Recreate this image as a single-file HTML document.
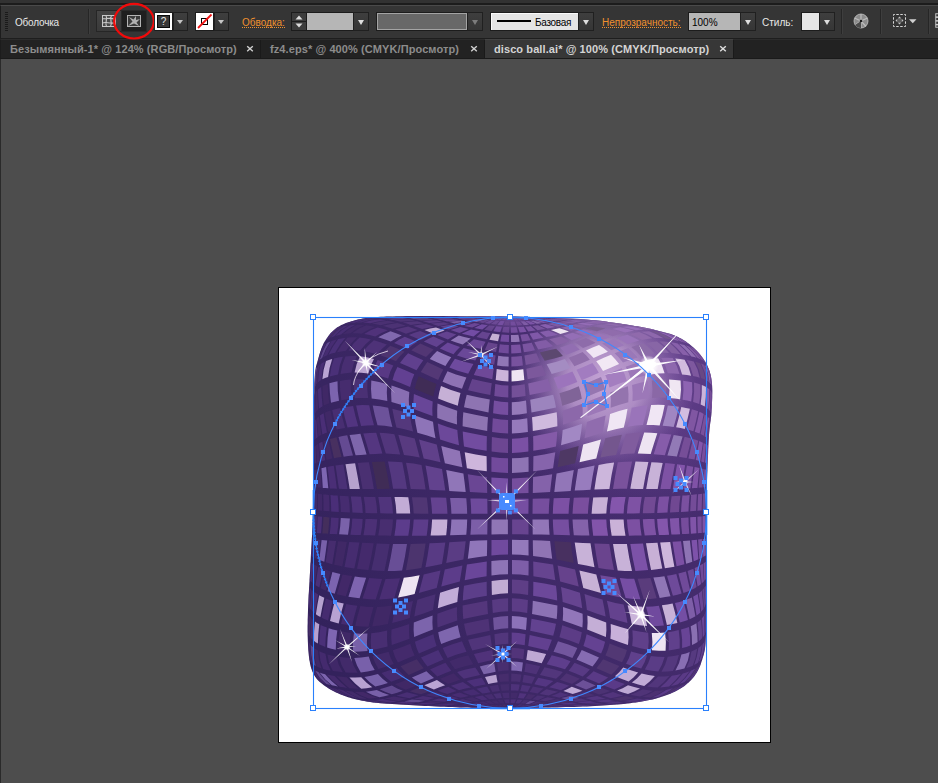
<!DOCTYPE html>
<html lang="ru">
<head>
<meta charset="utf-8">
<title>disco ball.ai @ 100% (CMYK/Просмотр)</title>
<style>
*{box-sizing:border-box;margin:0;padding:0}
html,body{width:938px;height:783px;overflow:hidden;background:#4d4d4d}
body{position:relative;font-family:"Liberation Sans",sans-serif;font-size:10px;color:#e6e6e6}
.abs{position:absolute}
#top{left:0;top:0;width:938px;height:3px;background:#323232}
#topline{left:0;top:3px;width:938px;height:2px;background:#1c1c1c}
#ctrl{left:0;top:5px;width:938px;height:33px;background:#353535;border-top:1px solid #4a4a4a;border-left:1px solid #1c1c1c}
#ctrlb{left:0;top:38px;width:938px;height:1px;background:#1e1e1e}
#tabs{left:0;top:39px;width:938px;height:19px;background:#222;border-top:1px solid #2c2c2c;border-left:1px solid #1c1c1c}
#tabsb{left:0;top:58px;width:938px;height:1px;background:#1a1a1a}
#canvasL{left:0;top:59px;width:1px;height:724px;background:#2a2a2a}
.lbl{position:absolute;top:17px;height:12px;line-height:12px;white-space:nowrap;font-size:10px;color:#e8e8e8}
.lnk{color:#f0902e}
.lnk:after{content:"";position:absolute;left:0;right:0;top:10px;height:1px;background:repeating-linear-gradient(90deg,#f0902e 0,#f0902e 1px,transparent 1px,transparent 2px)}
.sep{position:absolute;top:9px;width:1px;height:25px;background:#262626;box-shadow:1px 0 0 #3e3e3e}
.btn{position:absolute;top:12px;height:19px;background:#2b2b2b;border:1px solid #1f1f1f}
.dd{position:absolute;top:12px;height:19px;width:15px;background:linear-gradient(#3e3e3e,#363636);border:1px solid #202020}
.dd:after{content:"";position:absolute;left:3px;top:7px;border:3.5px solid transparent;border-top:4px solid #c6c6c6;border-bottom:0}
.dd.w:after{left:3.5px;top:6.5px;border-width:3.5px;border-top:5px solid #dedede;border-bottom:0}
.dd.dim:after{border-top-color:#7c7c7c}
.tab{position:absolute;top:39px;height:19px;font-weight:bold;font-size:11px;line-height:12px;color:#8c8c8c;white-space:nowrap;letter-spacing:0.09px}
.tab span{position:absolute;top:4px}
.tabsep{position:absolute;top:40px;width:1px;height:18px;background:#1a1a1a}
.x{position:absolute;top:44px;width:9px;height:9px}
#artboard{left:278px;top:287px;width:493px;height:456px;background:#000}
#artboard i{position:absolute;left:1px;top:1px;width:491px;height:454px;background:#fff;display:block}
</style>
</head>
<body>
<div id="top" class="abs"></div>
<div id="topline" class="abs"></div>
<div id="ctrl" class="abs"></div>
<div id="ctrlb" class="abs"></div>
<div id="tabs" class="abs"></div>
<div id="tabsb" class="abs"></div>
<div id="canvasL" class="abs"></div>
<!-- control bar -->
<svg class="abs" style="left:4px;top:11px" width="5" height="22" viewBox="0 0 5 22"><g fill="#1a1a1a"><rect x="1" y="1" width="3" height="1"/><rect x="1" y="3" width="3" height="1"/><rect x="1" y="5" width="3" height="1"/><rect x="1" y="7" width="3" height="1"/><rect x="1" y="9" width="3" height="1"/><rect x="1" y="11" width="3" height="1"/><rect x="1" y="13" width="3" height="1"/><rect x="1" y="15" width="3" height="1"/><rect x="1" y="17" width="3" height="1"/><rect x="1" y="19" width="3" height="1"/></g></svg>
<div class="lbl" style="left:15px;letter-spacing:-0.2px">Оболочка</div>
<div class="sep" style="left:88px"></div>
<div class="btn" style="left:96px;top:10px;width:26px;height:22px;background:linear-gradient(#444,#3a3a3a);border-color:#262626"></div>
<div class="btn" style="left:121px;top:10px;width:26px;height:22px;background:#1f1f1f;border-color:#2a2a2a"></div>
<svg class="abs" style="left:101px;top:14px" width="16" height="14" viewBox="0 0 16 14"><rect x="1.5" y="1.5" width="13" height="11" fill="#4a4a4a" stroke="#c8c8c8"/><path d="M1.500 4.500C5 5.500 8 3 14.500 5.500M1.500 9C5 7 9 10.500 14.500 8.500M5 1.500C7 5 3.500 8 5.500 12.500M10.500 1.500C8 5 12 8.500 9.500 12.500" fill="none" stroke="#c8c8c8" stroke-width="1.100"/></svg>
<svg class="abs" style="left:126px;top:14px" width="16" height="14" viewBox="0 0 16 14"><rect x="1.500" y="1.500" width="13" height="11" fill="#3a3a3a" stroke="#b4b4b4"/><path d="M2 12L6.500 7.500L3 3L7.500 5.500L10 2L10 6L14 5L10.500 8.500L13 12L8 9.500Z" fill="#b0b0b0"/></svg>
<svg class="abs" style="left:110px;top:0" width="48" height="44" viewBox="0 0 48 44"><ellipse cx="24" cy="21.200" rx="19.800" ry="17.300" fill="none" stroke="#f20a0a" stroke-width="2.200"/></svg>
<div class="abs" style="left:154px;top:12px;width:19px;height:19px;background:#fff;border:1px solid #1c1c1c;border-left-color:#2c2c2c"><div style="position:absolute;left:2px;top:2px;width:13px;height:13px;background:#383838;border:1px solid #0a0a0a;color:#e8e8e8;font-size:10px;line-height:11px;text-align:center">?</div></div>
<div class="dd" style="left:173px"></div>
<div class="abs" style="left:195px;top:12px;width:19px;height:19px;background:#fff;border:1px solid #1c1c1c"><svg width="17" height="17" viewBox="0 0 17 17" style="display:block"><rect x="5.500" y="5.500" width="6" height="6" fill="none" stroke="#000" stroke-width="1"/><path d="M2 15L15.500 1.500" stroke="#f01414" stroke-width="1.800"/></svg></div>
<div class="dd" style="left:214px"></div>
<div class="lbl lnk" style="left:242px">Обводка:</div>
<div class="abs" style="left:291px;top:12px;width:16px;height:19px;background:#1c1c1c"><div style="position:absolute;left:1px;top:1px;width:14px;height:8px;background:#3c3c3c"></div><div style="position:absolute;left:1px;top:10px;width:14px;height:8px;background:#3c3c3c"></div><svg width="16" height="19" viewBox="0 0 16 19" style="position:absolute;left:0;top:0"><path d="M4.500 7.500L8 3.500L11.500 7.500ZM4.500 11.500L8 15.500L11.500 11.500Z" fill="#dcdcdc"/></svg></div>
<div class="abs" style="left:306px;top:12px;width:48px;height:19px;background:#b6b6b6;border:1px solid #1c1c1c"></div>
<div class="dd w" style="left:353px;width:16px"></div>
<div class="abs" style="left:376px;top:12px;width:92px;height:19px;background:#686868;border:1px solid #1c1c1c;box-shadow:inset 0 0 0 1px #a4a4a4"></div>
<div class="dd w dim" style="left:467px;width:16px"></div>
<div class="abs" style="left:490px;top:12px;width:89px;height:19px;background:#e4e4e4;border:1px solid #1c1c1c;box-shadow:inset 1px 1px 0 #fafafa"><div style="position:absolute;left:6px;top:7px;width:34px;height:2px;background:#000"></div><div style="position:absolute;left:44px;top:4px;font-size:10px;line-height:12px;color:#000;letter-spacing:-0.3px">Базовая</div></div>
<div class="dd w" style="left:578px;width:16px"></div>
<div class="lbl lnk" style="left:602px">Непрозрачность:</div>
<div class="abs" style="left:688px;top:12px;width:53px;height:19px;background:#b6b6b6;border:1px solid #1c1c1c"><div style="position:absolute;left:3px;top:4px;font-size:10px;line-height:12px;color:#000">100%</div></div>
<div class="dd w" style="left:740px;width:16px"></div>
<div class="lbl" style="left:762px">Стиль:</div>
<div class="abs" style="left:801px;top:12px;width:19px;height:19px;background:#e6e6e6;border:1px solid #1c1c1c"></div>
<div class="dd w" style="left:819px;width:16px"></div>
<div class="sep" style="left:841px"></div>
<svg class="abs" style="left:853px;top:13px" width="16" height="16" viewBox="0 0 16 16"><circle cx="8" cy="8" r="7" fill="#8c8c8c" stroke="#c4c4c4" stroke-width="0.800"/><path d="M8 8L8 1M8 8L14.500 5M8 8L13 13.500M8 8L8 15M8 8L2 12M8 8L1.500 5" stroke="#bdbdbd" stroke-width="1.200" fill="none"/><path d="M8 8L2 12A7 7 0 0 0 8 15Z" fill="#4a4a4a"/><circle cx="8" cy="8" r="1.300" fill="#1a1a1a"/></svg>
<div class="sep" style="left:880px"></div>
<svg class="abs" style="left:892px;top:13px" width="26" height="15" viewBox="0 0 26 15"><rect x="1.500" y="1.500" width="12" height="12" fill="none" stroke="#d8d8d8" stroke-width="1" stroke-dasharray="2.500 1.500" stroke-dashoffset="1.200"/><path d="M7.500 3.500L9.300 5.400H5.700ZM7.500 11.500L9.300 9.600H5.700ZM3.500 7.500L5.400 5.700V9.300ZM11.500 7.500L9.600 5.700V9.300Z" fill="#c4c4c4"/><rect x="5.800" y="5.800" width="3.400" height="3.400" fill="#5c5c5c"/><path d="M17 6.300H24.500L20.750 10.300Z" fill="#d0d0d0"/></svg>
<div class="sep" style="left:928px"></div>
<svg class="abs" style="left:935px;top:11px" width="3" height="19" viewBox="0 0 4 19"><path d="M1 0.500H4M1 18.500H4M1 0V19" stroke="#d0d0d0" stroke-width="1.200" fill="none"/><rect x="1" y="4" width="3" height="2" fill="#d0d0d0"/><rect x="1" y="9" width="3" height="2" fill="#d0d0d0"/><rect x="1" y="14" width="3" height="2" fill="#d0d0d0"/></svg>
<!-- tabs -->
<div class="tab" style="left:1px;width:259px"><span style="left:9px">Безымянный-1* @ 124% (RGB/Просмотр)</span></div>
<svg class="x" style="left:246px" viewBox="0 0 9 9"><path d="M1.200 2.200L6.800 7.200M6.800 2.200L1.200 7.200" stroke="#d2d2d2" stroke-width="1.400"/></svg>
<div class="tabsep" style="left:260px"></div>
<div class="tab" style="left:261px;width:223px"><span style="left:9px">fz4.eps* @ 400% (CMYK/Просмотр)</span></div>
<svg class="x" style="left:470px" viewBox="0 0 9 9"><path d="M1.200 2.200L6.800 7.200M6.800 2.200L1.200 7.200" stroke="#d2d2d2" stroke-width="1.400"/></svg>
<div class="tabsep" style="left:484px"></div>
<div class="tab" style="left:485px;width:248px;background:#373737;color:#d4d4d4;border-top:1px solid #424242"><span style="left:9px;top:3px">disco ball.ai* @ 100% (CMYK/Просмотр)</span></div>
<svg class="x" style="left:719px" viewBox="0 0 9 9"><path d="M1.200 2.200L6.800 7.200M6.800 2.200L1.200 7.200" stroke="#e0e0e0" stroke-width="1.400"/></svg>
<div class="tabsep" style="left:733px"></div>

<div id="artboard" class="abs"><i></i></div>
<svg class="abs" style="left:0;top:0" width="938" height="783" viewBox="0 0 938 783">
<defs><clipPath id="bc"><path d="M510 316.5 515.4 316.6 521.3 316.8 527.6 317 534.2 317.2 541.1 317.4 548 317.6 554.9 317.9 561.8 318.2 568.4 318.5 574.7 318.8 580.6 319.1 586 319.5 591 319.9 595.7 320.3 600.1 320.8 604.4 321.3 608.5 321.9 612.3 322.4 616 323 619.5 323.5 622.8 324 626 324.6 629.1 325 632 325.5 634.7 325.9 637.2 326.3 639.4 326.7 641.4 327 643.2 327.4 644.9 327.7 646.6 328 648.2 328.4 649.8 328.7 651.4 329.1 653.2 329.5 655 330 656.9 330.5 658.9 331 660.9 331.4 662.9 331.9 664.8 332.4 666.8 333 668.8 333.5 670.7 334.1 672.6 334.8 674.5 335.5 676.3 336.2 678 337 679.7 337.9 681.4 338.8 683 339.8 684.6 340.8 686.2 341.8 687.7 342.9 689.2 344.1 690.7 345.2 692.1 346.4 693.4 347.6 694.7 348.8 696 350 697.2 351.2 698.4 352.5 699.5 353.7 700.6 355 701.6 356.4 702.6 357.7 703.5 359 704.4 360.4 705.3 361.8 706.1 363.2 706.8 364.6 707.5 366 708.1 367.4 708.7 368.8 709.2 370.1 709.7 371.5 710.1 372.9 710.5 374.2 710.8 375.7 711.1 377.2 711.4 378.8 711.6 380.4 711.8 382.1 712 384 712.1 386 712.2 388.1 712.3 390.4 712.3 392.8 712.2 395.2 712.2 397.7 712.1 400.2 712 402.7 711.9 405.1 711.8 407.5 711.6 409.8 711.5 412 711.4 414 711.2 415.9 711 417.6 710.8 419.2 710.6 420.8 710.3 422.4 710.1 424 709.9 425.8 709.6 427.8 709.4 429.9 709.2 432.3 709 435 708.8 438.1 708.6 441.5 708.4 445.2 708.2 449.2 708.1 453.3 707.9 457.5 707.7 461.7 707.5 465.9 707.4 470 707.2 473.9 707.1 477.6 707 481 706.9 484 706.8 486.8 706.8 489.3 706.7 491.7 706.7 494 706.7 496.2 706.6 498.4 706.6 500.7 706.6 503.2 706.6 505.8 706.5 508.8 706.5 512 706.5 515.5 706.4 519.1 706.4 522.9 706.3 526.8 706.3 530.8 706.2 535 706.2 539.3 706.1 543.8 706.1 548.4 706.1 553.1 706 558 706 563 706 568.4 706 574.2 706 580.5 706.1 587 706.1 593.6 706.2 600.2 706.2 606.8 706.2 613.1 706.2 619.2 706.2 624.7 706.1 629.7 706 634 705.9 637.6 705.7 640.7 705.6 643.2 705.4 645.4 705.2 647.2 705 648.8 704.8 650.1 704.5 651.4 704.2 652.7 703.9 654 703.5 655.4 703 657 702.5 658.7 702 660.5 701.4 662.1 700.9 663.8 700.3 665.5 699.6 667.1 698.9 668.6 698.1 670.2 697.3 671.7 696.4 673.2 695.5 674.6 694.5 676 693.4 677.4 692.3 678.7 691.2 680 689.9 681.2 688.7 682.4 687.3 683.6 686 684.7 684.5 685.9 683 686.9 681.4 688 679.7 689 678 690 676.2 691 674.3 691.9 672.4 692.8 670.4 693.7 668.3 694.5 666.2 695.3 664 696.1 661.7 696.8 659.4 697.5 657 698.2 654.5 698.9 652 699.5 649.4 700.1 646.8 700.6 644.2 701.1 641.4 701.6 638.7 702 635.8 702.4 632.9 702.8 629.9 703.2 626.8 703.5 623.6 703.9 620.4 704.2 617 704.5 613.5 704.8 610 705.1 606.4 705.3 602.7 705.6 598.9 705.8 595.1 706 591.1 706.2 587.1 706.4 582.9 706.5 578.7 706.7 574.4 706.9 570 707 565.4 707.1 560.6 707.3 555.6 707.4 550.4 707.5 545.2 707.6 539.9 707.7 534.7 707.8 529.4 707.8 524.3 707.9 519.3 707.9 514.6 708 510 708 505.7 708 501.5 708 497.5 708 493.7 708 489.9 708 486.2 707.9 482.5 707.9 478.9 707.8 475.2 707.8 471.6 707.7 467.8 707.6 464 707.5 460.1 707.4 456.2 707.3 452.3 707.1 448.4 707 444.5 706.8 440.6 706.7 436.6 706.5 432.7 706.3 428.8 706.1 424.8 705.9 420.9 705.7 417 705.5 413 705.3 408.9 705 404.8 704.8 400.6 704.6 396.5 704.3 392.3 704.1 388.2 703.8 384.3 703.5 380.4 703.2 376.7 702.8 373.3 702.4 370 702 367 701.6 364.2 701.1 361.5 700.6 359 700.1 356.6 699.6 354.4 699 352.2 698.4 350.1 697.8 348.1 697.2 346 696.5 344 695.8 342 695 340 694.2 338 693.3 336 692.4 334.1 691.4 332.2 690.5 330.3 689.4 328.6 688.4 326.9 687.3 325.3 686.3 323.8 685.2 322.3 684.1 321 683 319.8 681.9 318.7 680.9 317.7 679.9 316.8 678.9 315.9 677.8 315.2 676.8 314.5 675.6 313.8 674.5 313.2 673.2 312.6 671.9 312 670.5 311.5 669 311 667.4 310.5 665.7 310.1 664 309.8 662.1 309.4 660.3 309.2 658.3 308.9 656.3 308.7 654.2 308.5 652 308.3 649.8 308.2 647.4 308 645 307.9 642.5 307.8 639.9 307.7 637.3 307.6 634.6 307.6 631.8 307.6 628.9 307.6 626 307.7 623 307.7 619.9 307.8 616.7 307.9 613.4 308 610 308.1 606.5 308.3 602.9 308.4 599.2 308.6 595.4 308.9 591.5 309.1 587.5 309.3 583.5 309.6 579.4 309.8 575.3 310.1 571.2 310.3 567.1 310.5 563 310.7 559 310.9 555 311.2 551 311.4 547.1 311.6 543.1 311.8 539.1 312.1 534.9 312.3 530.7 312.5 526.3 312.7 521.8 312.8 517 313 512 313.1 506.7 313.3 501.1 313.4 495.2 313.5 489.1 313.5 482.9 313.6 476.6 313.7 470.2 313.8 463.9 313.8 457.6 313.9 451.5 313.9 445.6 314 440 314 434.5 314.1 428.9 314.1 423.3 314.1 417.7 314.1 412.2 314.1 406.8 314.1 401.7 314.1 396.7 314.2 392 314.2 387.6 314.3 383.6 314.5 380 314.7 376.8 314.9 374.1 315.2 371.8 315.4 369.8 315.7 368.1 316 366.6 316.3 365.2 316.7 363.9 317.1 362.7 317.5 361.4 317.9 360 318.3 358.5 318.7 356.9 319.2 355.3 319.6 353.8 320.1 352.2 320.6 350.7 321.1 349.2 321.7 347.8 322.3 346.4 322.9 345 323.5 343.6 324.2 342.3 325 341 325.8 339.7 326.6 338.4 327.5 337.2 328.3 336 329.3 334.8 330.2 333.6 331.2 332.5 332.3 331.4 333.4 330.4 334.5 329.4 335.7 328.4 337 327.5 338.3 326.7 339.7 325.9 341.2 325.1 342.7 324.4 344.3 323.7 345.9 323.1 347.5 322.5 349.2 321.9 350.9 321.4 352.6 320.9 354.3 320.4 356 320 357.7 319.6 359.3 319.2 360.9 318.9 362.5 318.6 364.1 318.3 365.8 318.1 367.5 317.9 369.3 317.7 371.2 317.5 373.3 317.3 375.6 317.2 378 317 380.6 316.8 383.4 316.7 386.4 316.6 389.4 316.5 392.6 316.4 395.9 316.3 399.3 316.2 402.8 316.2 406.3 316.1 409.8 316.1 413.4 316 417 316 420.6 316 424.4 316 428.2 316 432.1 316 436.1 316 440.1 316 444.1 316 448.1 316.1 452.1 316.1 456.1 316.1 460.1 316.2 464 316.2 467.8 316.2 471.4 316.2 474.9 316.2 478.3 316.2 481.7 316.2 485.2 316.2 488.8 316.2 492.5 316.2 496.4 316.2 500.6 316.3 505.1 316.4Z"/></clipPath>
<linearGradient id="lg" gradientUnits="userSpaceOnUse" x1="310" y1="600" x2="710" y2="450"><stop offset="0" stop-color="#33225c"/><stop offset="0.5" stop-color="#3f2968"/><stop offset="1" stop-color="#462c6e"/></linearGradient>
<radialGradient id="glow" gradientUnits="userSpaceOnUse" cx="604" cy="382" r="92"><stop offset="0" stop-color="#caaada" stop-opacity="0.95"/><stop offset="0.4" stop-color="#c0a0d2" stop-opacity="0.8"/><stop offset="0.75" stop-color="#a07cbc" stop-opacity="0.35"/><stop offset="1" stop-color="#9470b4" stop-opacity="0"/></radialGradient>
<radialGradient id="glow2" gradientUnits="userSpaceOnUse" cx="640" cy="385" r="150"><stop offset="0" stop-color="#7a4fa2" stop-opacity="0.7"/><stop offset="0.5" stop-color="#6e4798" stop-opacity="0.45"/><stop offset="1" stop-color="#5a3a86" stop-opacity="0"/></radialGradient>
<radialGradient id="pole"><stop offset="0" stop-color="#76509e" stop-opacity="0.75"/><stop offset="0.5" stop-color="#76509e" stop-opacity="0.45"/><stop offset="1" stop-color="#76509e" stop-opacity="0"/></radialGradient>
</defs>
<path d="M510 316.5 515.4 316.6 521.3 316.8 527.6 317 534.2 317.2 541.1 317.4 548 317.6 554.9 317.9 561.8 318.2 568.4 318.5 574.7 318.8 580.6 319.1 586 319.5 591 319.9 595.7 320.3 600.1 320.8 604.4 321.3 608.5 321.9 612.3 322.4 616 323 619.5 323.5 622.8 324 626 324.6 629.1 325 632 325.5 634.7 325.9 637.2 326.3 639.4 326.7 641.4 327 643.2 327.4 644.9 327.7 646.6 328 648.2 328.4 649.8 328.7 651.4 329.1 653.2 329.5 655 330 656.9 330.5 658.9 331 660.9 331.4 662.9 331.9 664.8 332.4 666.8 333 668.8 333.5 670.7 334.1 672.6 334.8 674.5 335.5 676.3 336.2 678 337 679.7 337.9 681.4 338.8 683 339.8 684.6 340.8 686.2 341.8 687.7 342.9 689.2 344.1 690.7 345.2 692.1 346.4 693.4 347.6 694.7 348.8 696 350 697.2 351.2 698.4 352.5 699.5 353.7 700.6 355 701.6 356.4 702.6 357.7 703.5 359 704.4 360.4 705.3 361.8 706.1 363.2 706.8 364.6 707.5 366 708.1 367.4 708.7 368.8 709.2 370.1 709.7 371.5 710.1 372.9 710.5 374.2 710.8 375.7 711.1 377.2 711.4 378.8 711.6 380.4 711.8 382.1 712 384 712.1 386 712.2 388.1 712.3 390.4 712.3 392.8 712.2 395.2 712.2 397.7 712.1 400.2 712 402.7 711.9 405.1 711.8 407.5 711.6 409.8 711.5 412 711.4 414 711.2 415.9 711 417.6 710.8 419.2 710.6 420.8 710.3 422.4 710.1 424 709.9 425.8 709.6 427.8 709.4 429.9 709.2 432.3 709 435 708.8 438.1 708.6 441.5 708.4 445.2 708.2 449.2 708.1 453.3 707.9 457.5 707.7 461.7 707.5 465.9 707.4 470 707.2 473.9 707.1 477.6 707 481 706.9 484 706.8 486.8 706.8 489.3 706.7 491.7 706.7 494 706.7 496.2 706.6 498.4 706.6 500.7 706.6 503.2 706.6 505.8 706.5 508.8 706.5 512 706.5 515.5 706.4 519.1 706.4 522.9 706.3 526.8 706.3 530.8 706.2 535 706.2 539.3 706.1 543.8 706.1 548.4 706.1 553.1 706 558 706 563 706 568.4 706 574.2 706 580.5 706.1 587 706.1 593.6 706.2 600.2 706.2 606.8 706.2 613.1 706.2 619.2 706.2 624.7 706.1 629.7 706 634 705.9 637.6 705.7 640.7 705.6 643.2 705.4 645.4 705.2 647.2 705 648.8 704.8 650.1 704.5 651.4 704.2 652.7 703.9 654 703.5 655.4 703 657 702.5 658.7 702 660.5 701.4 662.1 700.9 663.8 700.3 665.5 699.6 667.1 698.9 668.6 698.1 670.2 697.3 671.7 696.4 673.2 695.5 674.6 694.5 676 693.4 677.4 692.3 678.7 691.2 680 689.9 681.2 688.7 682.4 687.3 683.6 686 684.7 684.5 685.9 683 686.9 681.4 688 679.7 689 678 690 676.2 691 674.3 691.9 672.4 692.8 670.4 693.7 668.3 694.5 666.2 695.3 664 696.1 661.7 696.8 659.4 697.5 657 698.2 654.5 698.9 652 699.5 649.4 700.1 646.8 700.6 644.2 701.1 641.4 701.6 638.7 702 635.8 702.4 632.9 702.8 629.9 703.2 626.8 703.5 623.6 703.9 620.4 704.2 617 704.5 613.5 704.8 610 705.1 606.4 705.3 602.7 705.6 598.9 705.8 595.1 706 591.1 706.2 587.1 706.4 582.9 706.5 578.7 706.7 574.4 706.9 570 707 565.4 707.1 560.6 707.3 555.6 707.4 550.4 707.5 545.2 707.6 539.9 707.7 534.7 707.8 529.4 707.8 524.3 707.9 519.3 707.9 514.6 708 510 708 505.7 708 501.5 708 497.5 708 493.7 708 489.9 708 486.2 707.9 482.5 707.9 478.9 707.8 475.2 707.8 471.6 707.7 467.8 707.6 464 707.5 460.1 707.4 456.2 707.3 452.3 707.1 448.4 707 444.5 706.8 440.6 706.7 436.6 706.5 432.7 706.3 428.8 706.1 424.8 705.9 420.9 705.7 417 705.5 413 705.3 408.9 705 404.8 704.8 400.6 704.6 396.5 704.3 392.3 704.1 388.2 703.8 384.3 703.5 380.4 703.2 376.7 702.8 373.3 702.4 370 702 367 701.6 364.2 701.1 361.5 700.6 359 700.1 356.6 699.6 354.4 699 352.2 698.4 350.1 697.8 348.1 697.2 346 696.5 344 695.8 342 695 340 694.2 338 693.3 336 692.4 334.1 691.4 332.2 690.5 330.3 689.4 328.6 688.4 326.9 687.3 325.3 686.3 323.8 685.2 322.3 684.1 321 683 319.8 681.9 318.7 680.9 317.7 679.9 316.8 678.9 315.9 677.8 315.2 676.8 314.5 675.6 313.8 674.5 313.2 673.2 312.6 671.9 312 670.5 311.5 669 311 667.4 310.5 665.7 310.1 664 309.8 662.1 309.4 660.3 309.2 658.3 308.9 656.3 308.7 654.2 308.5 652 308.3 649.8 308.2 647.4 308 645 307.9 642.5 307.8 639.9 307.7 637.3 307.6 634.6 307.6 631.8 307.6 628.9 307.6 626 307.7 623 307.7 619.9 307.8 616.7 307.9 613.4 308 610 308.1 606.5 308.3 602.9 308.4 599.2 308.6 595.4 308.9 591.5 309.1 587.5 309.3 583.5 309.6 579.4 309.8 575.3 310.1 571.2 310.3 567.1 310.5 563 310.7 559 310.9 555 311.2 551 311.4 547.1 311.6 543.1 311.8 539.1 312.1 534.9 312.3 530.7 312.5 526.3 312.7 521.8 312.8 517 313 512 313.1 506.7 313.3 501.1 313.4 495.2 313.5 489.1 313.5 482.9 313.6 476.6 313.7 470.2 313.8 463.9 313.8 457.6 313.9 451.5 313.9 445.6 314 440 314 434.5 314.1 428.9 314.1 423.3 314.1 417.7 314.1 412.2 314.1 406.8 314.1 401.7 314.1 396.7 314.2 392 314.2 387.6 314.3 383.6 314.5 380 314.7 376.8 314.9 374.1 315.2 371.8 315.4 369.8 315.7 368.1 316 366.6 316.3 365.2 316.7 363.9 317.1 362.7 317.5 361.4 317.9 360 318.3 358.5 318.7 356.9 319.2 355.3 319.6 353.8 320.1 352.2 320.6 350.7 321.1 349.2 321.7 347.8 322.3 346.4 322.9 345 323.5 343.6 324.2 342.3 325 341 325.8 339.7 326.6 338.4 327.5 337.2 328.3 336 329.3 334.8 330.2 333.6 331.2 332.5 332.3 331.4 333.4 330.4 334.5 329.4 335.7 328.4 337 327.5 338.3 326.7 339.7 325.9 341.2 325.1 342.7 324.4 344.3 323.7 345.9 323.1 347.5 322.5 349.2 321.9 350.9 321.4 352.6 320.9 354.3 320.4 356 320 357.7 319.6 359.3 319.2 360.9 318.9 362.5 318.6 364.1 318.3 365.8 318.1 367.5 317.9 369.3 317.7 371.2 317.5 373.3 317.3 375.6 317.2 378 317 380.6 316.8 383.4 316.7 386.4 316.6 389.4 316.5 392.6 316.4 395.9 316.3 399.3 316.2 402.8 316.2 406.3 316.1 409.8 316.1 413.4 316 417 316 420.6 316 424.4 316 428.2 316 432.1 316 436.1 316 440.1 316 444.1 316 448.1 316.1 452.1 316.1 456.1 316.1 460.1 316.2 464 316.2 467.8 316.2 471.4 316.2 474.9 316.2 478.3 316.2 481.7 316.2 485.2 316.2 488.8 316.2 492.5 316.2 496.4 316.2 500.6 316.3 505.1 316.4Z" fill="url(#lg)"/>
<g clip-path="url(#bc)">
<circle cx="640" cy="385" r="150" fill="url(#glow2)"/>
<circle cx="604" cy="382" r="92" fill="url(#glow)"/>
<path fill="#6e489a" d="M506.9 316.4 506.9 316.4 506.9 316.4 498.7 316.3 490.4 316.2 490.3 316.2 490.3 316.2 498.6 316.3Z"/>
<path fill="#6c4896" d="M507 316.4 507 316.4 507 316.4 498.9 316.3 490.7 316.2 490.5 316.2 490.4 316.2 498.7 316.3ZM491.5 498.7 499.8 498.8 507.9 498.8 507.9 506.3 507.9 513.8 499.7 513.8 491.6 513.8 491.5 506.3ZM687.6 570.9 690.7 569.8 693.4 568.7 695 577.9 696.6 587.1 694.3 588.4 691.7 589.8 689.6 580.4Z"/>
<path fill="#6e4a9a" d="M507 316.4 507 316.4 507.1 316.4 499.1 316.3 491.2 316.3 491 316.2 490.8 316.2 498.9 316.3ZM667 575.8 671.8 574.9 676.3 574 678.9 583.8 681.6 593.5 677.4 594.7 672.9 595.7 669.9 585.8Z"/>
<path fill="#6c4898" d="M507.1 316.4 507.1 316.4 507.2 316.4 499.6 316.3 491.9 316.3 491.6 316.3 491.3 316.3 499.2 316.3ZM473.9 339.2 480 340.6 485.6 341.7 483.7 345.3 481.6 349.1 474.4 347.4 466.5 345.6 470.4 342.3Z"/>
<path fill="#724ca0" d="M507.2 316.4 507.3 316.4 507.3 316.4 500.1 316.3 492.9 316.4 492.5 316.4 492.1 316.3 499.7 316.3ZM507.5 316.4 507.6 316.4 507.7 316.4 501.5 316.4 495.2 316.6 494.7 316.5 494.2 316.5 500.9 316.4ZM462.7 431.5 475.2 434.1 486.9 436.2 486.7 443.4 486.7 450.7 475.5 448.9 464 446.6 463.2 438.9Z"/>
<path fill="#684692" d="M507.4 316.4 507.4 316.4 507.5 316.4 500.7 316.4 494 316.5 493.5 316.4 493.1 316.4 500.2 316.4Z"/>
<path fill="#64428c" d="M507.7 316.4 507.8 316.4 507.9 316.4 502.3 316.5 496.7 316.7 496.1 316.6 495.5 316.6 501.6 316.4ZM508.8 316.5 508.9 316.5 509 316.5 506.4 316.6 503.7 317.1 503 317 502.2 317 505.5 316.6ZM472.2 378.9 483.1 381.4 491.8 383.3 491 389.1 490.3 395.1 480.2 392.9 468.1 390.2 470.1 384.5Z"/>
<path fill="#5a3c7c" d="M508 316.4 508.1 316.5 508.2 316.5 503.2 316.5 498.3 316.8 497.6 316.7 497 316.7 502.5 316.5ZM511 316.5 511.1 316.5 511.2 316.5 514.5 316.8 517.8 317.4 517 317.4 516.2 317.4 513.6 316.8ZM505.5 321.3 507.5 321.4 509.5 321.4 509.4 323.3 509.3 325.4 506.7 325.3 504 325.2 504.8 323.1ZM637.6 578.8 644.2 578.4 650.4 577.9 653.5 588.1 656.7 598.3 650.5 598.9 643.8 599.3 640.7 589.1Z"/>
<path fill="#704a9c" d="M508.2 316.5 508.3 316.5 508.4 316.5 504.2 316.6 500 316.9 499.3 316.8 498.6 316.8 503.4 316.5ZM510 316.5 510.2 316.5 510.3 316.5 511.1 316.8 511.8 317.3 511 317.3 510.2 317.3 510.1 316.8ZM504.9 317.7 506 317.8 507 317.8 506.1 318.8 505.2 320.1 503.4 320 501.7 319.9 503.3 318.7ZM510.5 321.5 512.5 321.5 514.5 321.5 515.2 323.3 516 325.4 513.3 325.4 510.7 325.4 510.6 323.3Z"/>
<path fill="#64428a" d="M508.5 316.5 508.6 316.5 508.7 316.5 505.3 316.6 501.8 317 501.1 316.9 500.4 316.9 504.4 316.6Z"/>
<path fill="#684492" d="M509.1 316.5 509.2 316.5 509.3 316.5 507.5 316.7 505.7 317.2 504.9 317.1 504.1 317.1 506.6 316.7Z"/>
<path fill="#8060a8" d="M509.4 316.5 509.5 316.5 509.6 316.5 508.7 316.7 507.7 317.2 506.9 317.2 506.1 317.2 507.8 316.7Z"/>
<path fill="#744ea2" d="M509.7 316.5 509.8 316.5 510 316.5 509.9 316.8 509.8 317.3 509 317.3 508.2 317.2 508.9 316.7Z"/>
<path fill="#724c9e" d="M510.4 316.5 510.5 316.5 510.6 316.5 512.2 316.8 513.9 317.4 513.1 317.4 512.3 317.3 511.3 316.8ZM511.3 316.5 511.4 316.5 511.5 316.5 515.6 316.9 519.6 317.3 518.9 317.4 518.2 317.4 514.7 316.8ZM513 316.6 513 316.6 513 316.6 521.3 316.8 529.5 317 529.4 317 529.2 317 521.1 316.8Z"/>
<path fill="#6a4692" d="M510.7 316.5 510.8 316.5 510.9 316.5 513.4 316.8 515.9 317.4 515.1 317.4 514.3 317.4 512.5 316.8ZM511.6 316.5 511.7 316.5 511.8 316.5 516.6 316.8 521.3 317.3 520.7 317.3 520 317.3 515.8 316.9ZM510.3 317.9 511.3 317.9 512.4 317.9 513.2 319 513.9 320.3 512.2 320.3 510.4 320.3 510.4 318.9Z"/>
<path fill="#66448e" d="M511.8 316.5 511.9 316.5 512 316.5 517.5 316.8 523 317.3 522.3 317.3 521.7 317.3 516.8 316.8Z"/>
<path fill="#6e4896" d="M512.1 316.5 512.2 316.6 512.3 316.6 518.3 316.8 524.4 317.2 523.9 317.2 523.3 317.3 517.7 316.8ZM512.3 316.6 512.4 316.6 512.5 316.6 519.1 316.8 525.7 317.2 525.2 317.2 524.7 317.2 518.5 316.8Z"/>
<path fill="#5c3e7c" d="M512.5 316.6 512.6 316.6 512.6 316.6 519.8 316.8 526.9 317.2 526.4 317.2 526 317.2 519.2 316.8ZM512.9 316.6 513 316.6 513 316.6 521.1 316.8 529.1 317.1 528.9 317.1 528.7 317.1 520.8 316.8Z"/>
<path fill="#8260aa" d="M512.7 316.6 512.7 316.6 512.8 316.6 520.3 316.8 527.8 317.1 527.5 317.1 527.1 317.2 519.9 316.8Z"/>
<path fill="#704a9a" d="M512.8 316.6 512.9 316.6 512.9 316.6 520.7 316.8 528.6 317.1 528.3 317.1 528 317.1 520.4 316.8ZM499.8 344.2 504.3 344.7 508.9 344.9 508.8 349 508.7 353.4 503.6 353.1 498.6 352.5 499.2 348.3ZM600.3 575.2 608.3 576.6 616 577.7 618.9 587.7 621.7 597.5 613.6 596 605.3 594.1 602.8 584.7ZM678.4 573.5 682.3 572.5 685.9 571.4 688 581 690.2 590.4 687.1 591.7 683.5 592.9 680.9 583.3ZM699.9 565.5 701.5 564.6 702.9 563.7 703.4 572.5 703.9 581.3 702.9 582.2 701.7 583.4 700.8 574.4Z"/>
<path fill="#6c4894" d="M513.1 316.6 513.1 316.6 513.1 316.6 521.3 316.8 529.6 317 529.6 317 529.5 317 521.3 316.8ZM513 317.9 514 318 515.1 318 516.7 319 518.3 320.3 516.6 320.3 514.8 320.3 513.9 319Z"/>
<path fill="#664492" d="M484.1 316.2 484.2 316.2 484.2 316.2 475.9 316.2 467.5 316.2 467.4 316.2 467.3 316.2 475.8 316.2ZM495.1 317.1 496 317.2 496.9 317.3 492.7 317.9 488.5 318.8 487 318.6 485.5 318.5 490.3 317.7Z"/>
<path fill="#583a7a" d="M484.3 316.2 484.4 316.2 484.6 316.2 476.4 316.3 468.2 316.3 467.8 316.3 467.6 316.2 476 316.2Z"/>
<path fill="#644490" d="M484.8 316.2 485 316.3 485.3 316.3 477.3 316.4 469.2 316.5 468.8 316.4 468.3 316.3 476.6 316.3Z"/>
<path fill="#60408a" d="M485.5 316.3 485.9 316.3 486.3 316.4 478.6 316.5 470.8 316.7 470.1 316.6 469.5 316.5 477.5 316.4ZM419 439.5 427.8 441.9 436.7 444.5 438.6 453.3 440.5 462.2 432.1 460.2 423.7 458.4 421.3 448.8ZM632.4 630.2 640.5 631.8 648.2 632.8 648.7 641.5 648.1 649.7 640.3 648.2 632.2 646.1 632.8 638.5Z"/>
<path fill="#64428e" d="M486.5 316.4 487 316.4 487.5 316.5 480.2 316.7 472.8 316.9 471.9 316.8 471.2 316.7 478.9 316.6ZM473.9 318.1 475.4 318.3 476.9 318.5 470.8 319.2 464.4 319.8 462.4 319.5 460.5 319.1 467.3 318.6ZM606.9 600.8 615.4 602.9 623.6 604.6 625.9 613.9 627.5 622.9 619 620.7 610.1 618 608.8 609.6Z"/>
<path fill="#684696" d="M487.8 316.5 488.3 316.6 489 316.6 482.1 316.9 475.2 317.3 474.2 317.1 473.2 317 480.6 316.7Z"/>
<path fill="#6e4a9e" d="M489.3 316.6 489.9 316.7 490.6 316.8 484.4 317.1 478.1 317.6 476.9 317.5 475.8 317.3 482.6 317ZM454.9 358.7 463.3 361.4 473.4 363.9 470.8 368.7 468.2 373.7 457.7 370.8 449.4 367.6 452.1 363Z"/>
<path fill="#6e489c" d="M491 316.8 491.8 316.9 492.6 316.9 486.9 317.4 481.3 318 479.9 317.8 478.7 317.7 484.9 317.2Z"/>
<path fill="#6a4696" d="M493 317 493.8 317 494.6 317.1 489.7 317.7 484.8 318.4 483.3 318.2 481.9 318.1 487.5 317.5ZM502.3 317.6 503.3 317.6 504.4 317.7 502.6 318.6 500.8 319.9 499.1 319.7 497.4 319.6 499.9 318.5ZM474.4 323.1 477.4 323.6 480.3 324.1 476.4 325.8 472.2 327.6 468.1 326.8 464 325.9 469.4 324.5ZM698.7 593.3 700.4 591.9 701.8 590.6 702.7 599.7 703.5 608.9 702.4 610.3 701.2 611.7 700 602.5Z"/>
<path fill="#583c7c" d="M497.4 317.3 498.3 317.3 499.3 317.4 495.9 318.2 492.5 319.2 490.9 319 489.3 318.9 493.3 318Z"/>
<path fill="#744ca2" d="M499.8 317.4 500.8 317.5 501.8 317.6 499.2 318.4 496.6 319.6 494.9 319.4 493.3 319.3 496.5 318.2ZM704.6 587.4 705.2 586.6 705.6 585.9 705.8 594.8 705.9 603.8 705.7 604.5 705.4 605.3 705 596.3Z"/>
<path fill="#7850a6" d="M507.6 317.8 508.7 317.8 509.7 317.9 509.6 318.9 509.6 320.3 507.8 320.2 506.1 320.1 506.8 318.8ZM491.4 477.4 499.8 478.1 508 478.4 508 485.8 508 493.3 499.8 493.2 491.5 493 491.5 485.2Z"/>
<path fill="#68448e" d="M515.6 318 516.6 318 517.7 317.9 520.1 318.9 522.5 320.2 520.8 320.2 519.1 320.3 517.4 319ZM515.5 321.5 517.5 321.4 519.4 321.4 521 323.2 522.5 325.1 519.9 325.3 517.3 325.4 516.4 323.3Z"/>
<path fill="#724c9c" d="M518.2 317.9 519.2 317.9 520.2 317.9 523.4 318.8 526.6 320 525 320 523.4 320.1 520.8 318.9Z"/>
<path fill="#744e9e" d="M520.7 317.9 521.7 317.9 522.6 317.9 526.6 318.7 530.6 319.7 529 319.8 527.4 319.9 524.1 318.8ZM510.7 327.2 513.6 327.2 516.5 327.1 517.2 329.7 517.9 332.5 514.4 332.7 510.9 332.7 510.8 329.8Z"/>
<path fill="#724c9a" d="M523.1 317.8 524 317.8 524.9 317.8 529.6 318.5 534.4 319.4 532.9 319.5 531.4 319.6 527.2 318.7Z"/>
<path fill="#604280" d="M525.3 317.8 526.2 317.7 527 317.7 532.4 318.4 537.9 319.1 536.5 319.2 535.1 319.4 530.2 318.5Z"/>
<path fill="#7c54a6" d="M527.4 317.7 528.2 317.7 528.9 317.6 535 318.2 541.2 318.9 539.9 319 538.6 319.1 533 318.3Z"/>
<path fill="#704c94" d="M529.3 317.6 530 317.5 530.6 317.5 537.3 318 544 318.6 542.9 318.7 541.8 318.8 535.5 318.2Z"/>
<path fill="#7e56a6" d="M531 317.5 531.6 317.5 532.1 317.4 539.3 317.9 546.5 318.3 545.6 318.4 544.6 318.5 537.7 318ZM534.5 320.5 536.2 320.3 538 320.1 543 321.2 548.3 322.3 545.9 322.6 543.3 322.9 538.8 321.7Z"/>
<path fill="#724e96" d="M532.4 317.4 532.9 317.4 533.4 317.4 540.9 317.8 548.6 318.1 547.8 318.2 547 318.3 539.6 317.8Z"/>
<path fill="#8058aa" d="M533.6 317.4 534 317.3 534.4 317.3 542.2 317.6 550.2 318 549.6 318 548.9 318.1 541.2 317.7Z"/>
<path fill="#8258ac" d="M534.6 317.3 534.9 317.3 535.1 317.3 543.2 317.5 551.3 317.9 550.9 317.9 550.5 318 542.5 317.6Z"/>
<path fill="#7a54a2" d="M535.2 317.3 535.4 317.2 535.6 317.2 543.8 317.5 552.1 317.8 551.8 317.8 551.5 317.8 543.4 317.5Z"/>
<path fill="#724e94" d="M535.6 317.2 535.7 317.2 535.7 317.2 544 317.5 552.3 317.8 552.3 317.8 552.1 317.8 543.9 317.5Z"/>
<path fill="#785aa2" d="M461.1 316.2 461.1 316.2 461.3 316.2 452.7 316.2 444.1 316.1 443.9 316.1 443.8 316 452.5 316.1Z"/>
<path fill="#664494" d="M461.4 316.2 461.6 316.3 462 316.3 453.6 316.3 445.1 316.2 444.6 316.2 444.2 316.1 452.8 316.2Z"/>
<path fill="#684698" d="M462.2 316.3 462.7 316.4 463.2 316.5 455 316.5 446.7 316.5 445.9 316.4 445.3 316.3 453.8 316.3ZM465.3 316.8 466.2 317 467.2 317.1 459.6 317.3 451.9 317.4 450.6 317.2 449.5 317 457.5 316.9ZM413.9 393.9 423.2 397.7 432.7 401.6 432.3 408.7 432.5 416.1 423 412.5 413.7 409.1 413.4 401.2Z"/>
<path fill="#60408c" d="M463.5 316.6 464.2 316.7 464.9 316.8 457 316.8 449 316.9 448 316.7 447.1 316.6 455.3 316.6ZM668.1 632.2 673.7 631.2 678.7 630.1 679.7 639.5 679.7 648.6 674.5 649.6 668.7 650.5 668.9 641.5ZM631.1 651.4 639.3 653.7 647 655.4 644.6 662.3 641.2 668.6 633.7 666.4 626 663.7 629 657.9Z"/>
<path fill="#7a5ca4" d="M467.7 317.2 468.8 317.3 470 317.5 462.7 317.8 455.5 318.1 454 317.8 452.6 317.5 460.2 317.4ZM460.9 320.6 463.2 321.1 465.8 321.6 460 322.5 454.3 323.4 451.4 322.6 448.5 321.8 454.8 321.2Z"/>
<path fill="#6c489c" d="M470.6 317.6 471.9 317.8 473.2 318 466.4 318.5 459.6 318.9 457.9 318.6 456.3 318.2 463.4 318Z"/>
<path fill="#62428e" d="M477.7 318.6 479.4 318.8 481 319 475.8 319.9 470.2 320.9 467.8 320.5 465.5 320 471.8 319.3ZM451.7 324.6 455.1 325.5 458.6 326.5 453.5 327.9 448.4 329.4 444.3 328 440.3 326.6 446 325.6ZM425.5 465.6 433.6 467.2 442 469 443.7 479.7 445.3 490.6 437.3 490.2 429.5 489.7 427.6 477.5ZM697.5 622.5 699.5 620.9 701.1 619.4 701.9 628.7 702.1 638.1 700.6 639.7 698.7 641.3 698.4 631.9Z"/>
<path fill="#7e5ea8" d="M481.9 319.1 483.6 319.3 485.4 319.6 481.1 320.7 476.5 321.9 473.9 321.5 471.4 321.1 476.8 320.1ZM512 559.9 520.2 560.2 528.6 561 528.6 568.4 528.5 575.6 520.1 574.6 512 574.2 512 567.1ZM685.3 600.1 688.8 598.8 691.8 597.4 693.7 606.9 695.4 616.3 692.7 617.8 689.6 619.2 687.6 609.7Z"/>
<path fill="#62428a" d="M486.3 319.7 488.1 319.9 490 320.1 486.6 321.4 483.1 322.9 480.4 322.5 477.8 322.1 482.2 320.8ZM489.2 325.4 492.1 325.8 494.9 326.1 493.3 328.5 491.6 331 488 330.5 484.2 329.8 486.8 327.5ZM702.4 590 703.4 588.9 704.2 587.8 704.7 596.8 705.2 605.8 704.6 607 703.9 608.2 703.2 599.1Z"/>
<path fill="#684694" d="M490.9 320.2 492.8 320.4 494.7 320.5 492.2 322.1 489.6 323.8 487 323.4 484.4 323.1 487.7 321.5Z"/>
<path fill="#64448e" d="M495.7 320.6 497.6 320.8 499.5 320.9 497.8 322.6 496.1 324.5 493.5 324.3 490.9 323.9 493.3 322.2Z"/>
<path fill="#744ea4" d="M500.5 321 502.5 321.1 504.5 321.2 503.6 323 502.7 325.1 500 324.9 497.4 324.7 499 322.7ZM675 603 679.5 601.9 683.5 600.7 685.8 610.3 687.9 619.9 684.1 621.2 679.8 622.4 677.6 612.7ZM693.1 596.7 695.6 595.3 697.7 593.9 699.2 603.2 700.4 612.5 698.6 614 696.6 615.5 695 606.1Z"/>
<path fill="#8462aa" d="M520.4 321.4 522.4 321.3 524.3 321.2 526.6 322.8 529 324.6 526.4 324.9 523.8 325 522.2 323.1ZM533.1 476.9 542.7 475.7 552.2 474.2 551.1 483.1 550.1 492.1 541.5 492.5 532.8 492.9 532.9 484.9ZM572.5 519.5 580.3 519.5 587.9 519.5 588.4 527.2 589.4 535.6 581.7 535.5 573.8 535.3 573 527.2Z"/>
<path fill="#7e56aa" d="M525.2 321.2 527.1 321.1 529 320.9 532.2 322.3 535.5 323.9 532.9 324.2 530.3 324.5 527.8 322.7Z"/>
<path fill="#8666ac" d="M529.9 320.8 531.8 320.7 533.6 320.6 537.7 321.8 542 323.1 539.4 323.4 536.8 323.8 533.3 322.2Z"/>
<path fill="#845cae" d="M538.8 320.1 540.5 319.9 542.1 319.7 548 320.6 554.2 321.4 551.9 321.8 549.6 322.1 544 321Z"/>
<path fill="#7e58a4" d="M542.9 319.6 544.4 319.5 545.8 319.3 552.4 320 559 320.7 557.2 321 555.3 321.3 548.9 320.5Z"/>
<path fill="#865eae" d="M546.5 319.3 547.9 319.1 549.2 319 556.2 319.6 563.2 320.1 561.6 320.3 559.9 320.6 553.3 319.9ZM539.5 325 542.5 324.6 545.4 324.1 550.4 325.6 555.7 327.1 551.7 327.8 547.6 328.5 543.4 326.7Z"/>
<path fill="#845ca8" d="M549.8 318.9 550.9 318.8 552 318.7 559.4 319.2 566.8 319.6 565.5 319.8 564 320 556.9 319.5Z"/>
<path fill="#8860b0" d="M552.5 318.6 553.4 318.5 554.3 318.5 562 318.9 569.8 319.3 568.7 319.4 567.5 319.6 560 319.1Z"/>
<path fill="#865eaa" d="M554.7 318.4 555.4 318.3 556.1 318.3 564.1 318.6 572.1 319 571.3 319.1 570.3 319.2 562.5 318.8Z"/>
<path fill="#8a62ae" d="M556.4 318.2 556.9 318.2 557.4 318.1 565.6 318.5 573.8 318.9 573.2 319 572.5 319 564.4 318.6Z"/>
<path fill="#8860ac" d="M557.6 318.1 557.9 318.1 558.2 318 566.5 318.4 574.8 318.8 574.5 318.9 574.1 318.9 565.8 318.5Z"/>
<path fill="#845ea8" d="M558.3 318 558.4 318 558.5 318 566.8 318.4 575.2 318.8 575.2 318.8 575 318.8 566.6 318.4Z"/>
<path fill="#5a3c86" d="M437.4 316 437.4 316 437.7 316 428.8 316 419.9 316 419.6 316 419.5 316 428.5 316ZM650.8 656 657.9 656.7 664.6 656.9 662 664.6 658.3 671.5 651.8 670.8 644.8 669.4 648.3 663.1Z"/>
<path fill="#5e3e8c" d="M437.8 316.1 438.2 316.1 438.7 316.2 430 316.1 421.1 316.1 420.5 316.1 420.1 316 429 316ZM404.8 336.7 410.8 339.3 417.1 342 412.4 345.1 407.8 348.7 400.8 345.7 394.1 342.9 399.3 339.5ZM551.7 655.3 562.2 658.1 570.5 661.2 567.8 665.4 565 669.3 556.6 666.7 546.6 664.3 549.2 659.9Z"/>
<path fill="#603e8c" d="M439 316.2 439.7 316.3 440.4 316.5 431.9 316.4 423.3 316.4 422.3 316.3 421.5 316.2 430.3 316.2Z"/>
<path fill="#523674" d="M440.9 316.5 441.9 316.7 442.9 316.9 434.7 316.8 426.3 316.8 425 316.6 423.8 316.5 432.4 316.5ZM420.3 343.5 426.9 346.5 433.6 349.6 429.8 353.2 426 357.1 418.6 353.7 411.3 350.3 415.8 346.7Z"/>
<path fill="#5c3e88" d="M443.5 317 444.8 317.2 446.1 317.5 438.3 317.5 430.3 317.5 428.6 317.2 427 316.9 435.3 317ZM698.4 648 700.4 646.6 701.9 645.1 700.5 653.9 698.2 662.4 696.4 663.7 694.1 665 696.8 656.7Z"/>
<path fill="#62408e" d="M446.9 317.6 448.4 317.9 450 318.2 442.6 318.4 435 318.5 433 318.1 431.1 317.7 439.1 317.7ZM705.9 636.1 705.9 635.7 706 635.6 705.4 645.2 703.8 654.3 703.7 654.4 703.6 654.8 705.4 645.7Z"/>
<path fill="#684496" d="M450.9 318.4 452.7 318.8 454.6 319.2 447.7 319.5 440.7 319.8 438.3 319.2 436.1 318.7 443.6 318.6ZM455.6 319.4 457.7 319.8 459.8 320.3 453.5 320.9 447.1 321.5 444.5 320.8 441.9 320.1 448.8 319.8ZM681 629.5 685.3 628.3 689 626.9 690.1 636.4 690.3 645.6 686.4 646.9 682.1 648 682.1 639Z"/>
<path fill="#62428c" d="M467.1 321.8 470 322.3 472.9 322.8 467.7 324.2 462.2 325.5 459 324.7 455.9 323.8 461.4 322.8ZM584.5 594.1 593.6 596.9 602.5 599.6 604.3 608.2 605.6 616.5 596.4 613.4 586.9 610 585.9 602.2Z"/>
<path fill="#724ca2" d="M481.8 324.3 484.8 324.8 487.7 325.2 485.1 327.2 482.3 329.5 478.3 328.8 474.3 328 478.2 326.1Z"/>
<path fill="#704a9e" d="M496.3 326.3 499.2 326.6 502 326.8 501.2 329.3 500.3 332.1 496.8 331.8 493.4 331.3 494.8 328.7ZM491.5 540.1 499.8 539.9 508 539.8 508 547.2 508 554.5 499.8 554.8 491.4 555.5 491.5 547.8ZM646 606.7 652.7 606.4 658.9 605.7 661.6 615.6 663.9 625.5 657.6 626.1 650.7 626.2 648.7 616.6Z"/>
<path fill="#684490" d="M503.5 326.9 506.4 327 509.3 327.1 509.2 329.8 509.1 332.7 505.6 332.5 502.1 332.3 502.8 329.4ZM483.6 352.8 490 354.2 495.6 355.4 494.9 360 494.2 364.8 487.7 363.4 479.8 361.5 481.7 357.1ZM512.1 519.4 520.3 519.4 528.4 519.4 528.5 526.9 528.5 534.4 520.2 534.3 512.1 534.3 512.1 526.8Z"/>
<path fill="#7c52a6" d="M517.9 327.1 520.8 327 523.7 326.8 525.1 329.2 526.6 331.8 523.1 332.2 519.7 332.5 518.8 329.6Z"/>
<path fill="#7a52a2" d="M525.1 326.6 527.9 326.4 530.7 326.1 533.2 328.2 535.7 330.5 531.9 331.1 528.3 331.6 526.7 329ZM511.1 344.9 515.7 344.8 520.2 344.5 520.8 348.5 521.4 352.7 516.4 353.2 511.3 353.4 511.2 349.1Z"/>
<path fill="#78549e" d="M532.2 325.9 535.1 325.6 538 325.2 541.7 327 545.6 328.9 541.5 329.6 537.6 330.2 534.8 328Z"/>
<path fill="#7e5aa2" d="M546.9 323.9 549.8 323.5 552.6 323.1 558.3 324.2 563.7 325.3 560.7 326 557.5 326.7 552.1 325.3Z"/>
<path fill="#805ca2" d="M554 322.9 556.4 322.5 558.7 322.1 564.8 322.9 570.9 323.7 568.1 324.3 565.2 325 559.6 323.9Z"/>
<path fill="#8660a8" d="M559.8 321.9 561.9 321.5 563.9 321.2 570.6 321.8 577.3 322.4 574.9 322.9 572.3 323.4 566 322.7ZM528.2 383.4 536.9 381.5 547.7 379.1 549.9 384.6 551.9 390.4 539.7 393 529.7 395.1 528.9 389.2Z"/>
<path fill="#8e66b0" d="M564.9 321 566.7 320.8 568.5 320.5 575.6 321 582.9 321.5 580.8 321.8 578.5 322.2 571.6 321.6Z"/>
<path fill="#9068b4" d="M569.3 320.4 570.9 320.2 572.4 320 580 320.4 587.6 320.9 585.8 321.1 583.9 321.3 576.6 320.9Z"/>
<path fill="#8260a2" d="M573.1 319.9 574.4 319.7 575.6 319.6 583.5 320 591.4 320.6 590 320.7 588.4 320.8 580.7 320.3Z"/>
<path fill="#8662a4" d="M576.2 319.6 577.2 319.5 578.1 319.4 586.2 319.9 594.4 320.5 593.3 320.5 592.1 320.5 584.1 320Z"/>
<path fill="#8864a8" d="M578.5 319.3 579.3 319.3 579.9 319.3 588.2 319.8 596.5 320.5 595.8 320.5 594.9 320.5 586.7 319.9Z"/>
<path fill="#8a66aa" d="M580.2 319.2 580.7 319.2 581 319.2 589.5 319.8 597.9 320.6 597.4 320.6 596.9 320.5 588.5 319.8Z"/>
<path fill="#926ab4" d="M581.2 319.2 581.4 319.2 581.5 319.2 589.9 319.8 598.3 320.6 598.2 320.6 598 320.6 589.6 319.8Z"/>
<path fill="#4e3470" d="M412.8 316 412.9 316 413.2 316.1 404 316.2 394.6 316.3 394.3 316.3 394.1 316.3 403.6 316.2ZM390.3 345.7 397.3 348.6 404.5 351.7 400.1 356.1 396 361.2 388.2 358.1 380.7 355.5 385.3 350.2Z"/>
<path fill="#4e3276" d="M413.4 316.1 413.9 316.1 414.5 316.2 405.4 316.2 396.2 316.4 395.4 316.4 394.8 316.4 404.2 316.2ZM464 623.7 477 620.9 488.5 618.7 489.1 624.8 489.8 630.8 479.2 633 466.8 635.7 465.2 629.8Z"/>
<path fill="#4e3476" d="M414.9 316.2 415.8 316.3 416.8 316.4 408 316.4 398.9 316.5 397.7 316.5 396.7 316.4 405.9 316.3ZM409.4 319.2 412.4 319.9 415.5 320.8 408.2 321.2 400.8 321.8 397.1 320.9 393.6 320.1 401.5 319.5Z"/>
<path fill="#583a84" d="M417.4 316.5 418.7 316.6 420.1 316.8 411.5 316.8 402.8 316.9 401.1 316.7 399.6 316.6 408.6 316.5ZM420.2 331.1 425.4 333.2 430.7 335.4 425.7 337.5 420.7 340 414.7 337.4 408.9 334.9 414.5 332.8ZM429.5 543.3 437.3 542.9 445.3 542.4 443.7 553.3 442 563.9 433.6 565.7 425.4 567.2 427.6 555.4ZM574.5 662.8 582.3 666.1 589.9 669.5 586.3 673.2 582.6 676.4 575.7 673.5 568.6 670.7 571.6 666.9Z"/>
<path fill="#5c3c8a" d="M420.8 316.9 422.5 317.2 424.3 317.5 416.1 317.5 407.8 317.6 405.6 317.3 403.7 317 412.3 316.9ZM413.7 519.5 421 519.5 428.4 519.5 427.8 527.3 426.7 535.7 419.2 535.8 411.9 535.8 413.1 527.3ZM444.8 569.6 453.6 567.5 462.4 565.5 461.1 573.6 459.8 581.4 450.5 584 441.3 586.6 443 578.2ZM701.1 662.6 701.4 661.9 701.7 661.4 698.3 669.6 693.7 676.8 693.2 677.2 692.6 677.7 697.5 670.7ZM701.8 661.2 701.9 660.8 701.9 660.7 698.7 669 694.3 676.3 694.2 676.4 693.9 676.6 698.5 669.4Z"/>
<path fill="#70549c" d="M425.2 317.7 427.2 318.1 429.4 318.5 421.6 318.6 413.8 318.8 411.3 318.2 408.9 317.8 417.1 317.7ZM493.1 617.8 500.7 616.5 508.1 616 508.2 622.2 508.2 628.2 501.1 628.7 494 629.9 493.5 623.9Z"/>
<path fill="#54387c" d="M430.5 318.8 432.9 319.4 435.4 320 428.2 320.2 421 320.5 418 319.7 415.2 319.1 422.9 318.9ZM392.3 408.7 400.9 411 409.7 413.7 411.1 422.4 413.1 431.5 404.6 429.3 396.4 427.6 394.1 418Z"/>
<path fill="#5a3a84" d="M436.7 320.3 439.5 321.1 442.3 321.9 435.8 322.4 429.1 322.9 425.7 321.9 422.5 320.9 429.7 320.6Z"/>
<path fill="#583a82" d="M443.8 322.3 446.9 323.2 450.1 324.1 444.2 325 438.3 325.9 434.5 324.7 430.9 323.5 437.4 322.9ZM492.1 599.9 500.3 598.7 508.1 598.2 508.1 604.8 508.1 611.3 500.6 611.8 492.8 613.1 492.4 606.6Z"/>
<path fill="#6a4698" d="M460.3 327 464.2 328 468.8 329 463.9 331 459.4 333 454.9 331.6 450.6 330.1 455.5 328.5ZM701.8 618.6 703 617.1 704 615.7 704.4 625 704.6 634.4 703.8 635.9 702.7 637.4 702.5 628Z"/>
<path fill="#724ca4" d="M471.1 329.5 475.7 330.4 480.1 331.2 476.9 333.8 473.5 336.4 467.5 335.1 461.8 333.7 466.5 331.5Z"/>
<path fill="#664490" d="M482.3 331.6 486.4 332.4 490.4 333.1 488.7 336.1 487 339.2 481.9 338.2 476.4 337.1 479.4 334.3ZM533.2 561.6 543.1 562.9 553.1 564.6 554.2 572.5 555.3 580.2 544.2 578.1 533.4 576.3 533.3 569ZM561 587.1 570.5 589.8 579.9 592.7 581.2 600.7 582.2 608.3 572.5 605 562.7 601.9 562 594.6Z"/>
<path fill="#c6b0d4" d="M492.3 333.4 496 333.9 499.7 334.4 498.9 337.7 498.1 341.2 493.9 340.5 489.4 339.7 490.9 336.4Z"/>
<path fill="#744ca0" d="M501.6 334.6 505.3 334.8 509.1 335 509 338.4 508.9 342 504.6 341.8 500.3 341.4 500.9 337.9Z"/>
<path fill="#9276b6" d="M510.9 335 514.7 335 518.4 334.8 519.1 338.1 519.7 341.7 515.4 342 511.1 342.1 511 338.4Z"/>
<path fill="#78509e" d="M520.3 334.7 523.9 334.3 527.6 333.9 529.1 336.9 530.6 340.2 526.1 340.9 521.9 341.5 521.1 338Z"/>
<path fill="#8058a8" d="M529.5 333.6 533.5 333 537.6 332.3 540.4 334.9 543.5 337.7 538 338.8 533 339.7 531.2 336.6Z"/>
<path fill="#865eac" d="M539.8 332 544.2 331.2 548.7 330.4 553.3 332.5 558 334.7 552.3 335.9 546.4 337.1 542.9 334.5Z"/>
<path fill="#eee4f2" d="M551 329.9 555.6 329.1 559.4 328.2 564.2 329.8 569 331.4 564.8 332.7 560.4 334 555.9 331.9ZM511.5 370.4 517.4 370.1 523.3 369.3 523.8 374.5 524.3 380 518 381 511.6 381.4 511.5 375.8ZM583.2 444.5 592.2 441.9 601 439.5 598.7 448.8 596.3 458.4 588 460.2 579.5 462.2 581.4 453.3ZM644.2 432.5 651 432.7 657.3 433.2 653.9 443.7 650.7 454.1 644.4 453.8 637.8 453.6 641 443ZM403.8 577.8 411.6 576.7 419.6 575.2 417.1 584.8 414.6 594.1 406.2 596.1 398.1 597.6 401 587.8ZM651.8 633 658.7 633.1 665.1 632.6 665.9 641.9 665.6 650.7 659 650.8 651.9 650.2 652.4 641.9Z"/>
<path fill="#8c66ae" d="M561.1 327.8 564.5 326.9 567.8 326.1 573.4 327.2 579.1 328.4 575.2 329.5 571.1 330.8 566.1 329.3Z"/>
<path fill="#8a64aa" d="M569.4 325.7 572.6 325 575.5 324.3 581.8 325 588.2 325.8 584.7 326.8 581 327.8 575.2 326.8Z"/>
<path fill="#946cb6" d="M577 324 579.7 323.3 582.4 322.8 589.2 323.4 596.1 324 593.1 324.6 589.8 325.4 583.4 324.7Z"/>
<path fill="#8e68ae" d="M583.6 322.6 586 322.2 588.3 321.8 595.6 322.3 603 322.9 600.4 323.3 597.6 323.7 590.6 323.1ZM661.3 357.9 667.2 357.8 672.7 358.1 676.7 365.8 679.5 374.1 673.9 373.5 667.8 373.2 665.1 365.2Z"/>
<path fill="#946cb4" d="M589.4 321.7 591.4 321.4 593.3 321.2 601 321.8 608.7 322.5 606.5 322.6 604.2 322.8 596.8 322.2Z"/>
<path fill="#8e68ac" d="M594.2 321.2 595.8 321.1 597.3 321 605.3 321.7 613.3 322.6 611.6 322.5 609.7 322.5 601.9 321.8ZM641.2 331.8 645.3 331.4 649 331.2 656.3 334.2 663.4 338.2 659.2 338 654.6 338.1 648 334.6Z"/>
<path fill="#8a66a6" d="M598 321 599.3 321 600.5 321 608.6 321.9 616.8 322.9 615.6 322.8 614.1 322.6 606 321.7Z"/>
<path fill="#946eb6" d="M601 321.1 601.9 321.1 602.7 321.2 611 322.2 619.4 323.3 618.5 323.2 617.4 323 609.2 322ZM563.5 335.6 568.1 334.1 572.7 332.7 577.6 334.5 582.4 336.4 577.2 338.3 571.8 340.3 567.6 337.9Z"/>
<path fill="#926cb2" d="M603 321.2 603.6 321.2 604.1 321.3 612.5 322.4 620.9 323.7 620.4 323.6 619.7 323.4 611.4 322.2Z"/>
<path fill="#966eb8" d="M604.2 321.3 604.5 321.3 604.6 321.4 613 322.5 621.4 323.8 621.3 323.8 621.1 323.7 612.6 322.4Z"/>
<path fill="#4a306c" d="M387.1 316.6 387.2 316.6 387.6 316.6 377.9 317 368.2 317.8 367.8 317.9 367.7 317.9 377.4 317Z"/>
<path fill="#523680" d="M387.8 316.6 388.4 316.6 389.3 316.6 379.7 317 370.2 317.7 369.2 317.8 368.5 317.8 378.2 317Z"/>
<path fill="#563682" d="M389.7 316.6 390.9 316.6 392.2 316.7 382.9 317 373.5 317.7 372 317.7 370.7 317.7 380.3 317Z"/>
<path fill="#4e3278" d="M392.9 316.7 394.5 316.9 396.3 317 387.3 317.3 378.3 317.9 376.2 317.8 374.4 317.7 383.7 317.1ZM373.9 340.2 380.3 342.2 386.9 344.5 381.8 349 377.1 354.3 370 352.5 363.3 351.1 368.5 345.2ZM437.4 613.8 447.1 610.3 457 607.1 456.9 614 457.3 620.5 447.3 623.9 437.6 627.6 437.2 620.9ZM525.8 663.2 532.3 664.6 540.2 666.3 538.2 670.4 536.3 674.3 529.9 672.9 524.4 671.8 525.1 667.6ZM665.1 695.7 666.5 695.2 667.7 694.7 659.5 697.7 650.9 700.1 649.8 700.4 648.5 700.8 656.9 698.6ZM523.8 674.8 529.1 675.8 535 677 533.3 680.5 531.7 683.8 526.9 682.9 522.4 682.2 523.1 678.6ZM632.5 703 634.9 702.9 637 702.7 628.6 703.6 620.2 704.3 618.4 704.3 616.3 704.3 624.4 703.8ZM597.8 702.9 600.7 703.5 603.4 703.9 595.8 704.1 588.4 704.3 586.1 703.9 583.7 703.5 590.7 703.2ZM547.6 697.2 551.7 697.9 555.7 698.7 550.3 700 545.4 701.3 542.4 700.8 539.4 700.4 543.3 698.8Z"/>
<path fill="#50347c" d="M397.2 317.1 399.3 317.4 401.5 317.7 393 318 384.5 318.5 381.8 318.2 379.4 318 388.4 317.4ZM378.3 497 384.6 497.1 391.1 497.1 392.4 505.6 393 513.5 386.5 513.4 380.3 513.3 379.6 505.4ZM495.7 649.2 502 648.2 508.4 647.8 508.5 653 508.5 658 502.6 658.3 496.7 659.2 496.2 654.3ZM637 698.4 641.1 698.9 644.8 699.1 637.4 700.8 629.8 702 626.4 701.6 622.8 701 630 699.9ZM581 698.6 584.7 699.7 588.2 700.6 581.9 701.2 575.5 701.7 572.5 701 569.4 700.2 575.2 699.4ZM598.4 705.8 598.6 705.8 598.7 705.8 590.1 706.2 581.5 706.6 581.4 706.6 581.3 706.6 589.8 706.2Z"/>
<path fill="#583a86" d="M402.7 317.9 405.3 318.4 408 318.9 400 319.2 392 319.7 388.8 319.1 385.9 318.7 394.3 318.2Z"/>
<path fill="#52367a" d="M417.2 321.2 420.6 322.2 424.2 323.4 417.5 324.1 410.8 324.9 406.7 323.6 402.7 322.4 409.9 321.7Z"/>
<path fill="#563880" d="M426.1 324 429.9 325.3 433.9 326.7 428 327.8 422.1 329 417.4 327.3 413 325.7 419.5 324.7Z"/>
<path fill="#c0aad4" d="M436 327.4 440.3 328.9 444.7 330.5 439.6 332.2 434.4 334 429.4 331.9 424.5 329.9 430.2 328.6Z"/>
<path fill="#644290" d="M446.9 331.4 451.5 333 456.3 334.6 452.1 336.9 447.9 339.4 442.4 337.2 437.1 335 442 333.1ZM430.6 497.5 438.3 497.6 446.2 497.8 447 506 447.5 513.7 439.7 513.7 432.1 513.7 431.6 505.9Z"/>
<path fill="#9076b8" d="M458.7 335.4 464.2 337 470.7 338.5 466.7 341.5 462.7 344.6 456.3 342.6 450.7 340.4 454.7 337.9ZM446.2 469.9 454.7 471.7 463.4 473.4 464.6 482.6 465.7 491.9 457.4 491.4 449.3 490.9 447.9 480.3Z"/>
<path fill="#66448c" d="M488.2 342.3 493.1 343.2 497.5 343.9 496.8 347.9 496.1 352.1 490.9 351.1 484.9 349.8 486.6 345.9Z"/>
<path fill="#7a54a0" d="M522.4 344.2 526.9 343.6 531.7 342.7 533.3 346.3 535 350.2 529.1 351.4 523.9 352.3 523.2 348.2Z"/>
<path fill="#825ca6" d="M534.3 342.2 539.9 341.1 546 339.9 549.5 342.9 553.3 346.2 545.5 347.9 538.3 349.5 536.2 345.7Z"/>
<path fill="#8862a6" d="M549.1 339.2 555.6 337.8 561.1 336.4 565.1 338.8 569.1 341.3 563.5 343.3 557.1 345.2 553.2 342.1Z"/>
<path fill="#966eb6" d="M574.9 332 579.2 330.6 583.3 329.2 589 330.5 594.7 332 589.9 333.6 585 335.4 579.9 333.6Z"/>
<path fill="#7c6094" d="M585.3 328.6 589.2 327.5 592.9 326.5 599.2 327.4 605.6 328.6 601.4 329.8 597 331.2 591.1 329.8Z"/>
<path fill="#8a68a8" d="M594.6 326 598 325.2 601.3 324.5 608.2 325.4 615.1 326.4 611.5 327.1 607.6 328 601.1 326.9Z"/>
<path fill="#906cae" d="M602.8 324.2 605.7 323.8 608.4 323.4 615.8 324.3 623.2 325.3 620.2 325.6 616.9 326.1 609.8 325.1ZM586.9 422 596.3 418.6 605.6 415.4 604.3 423.9 602.6 432.7 593.6 435.4 584.5 438.2 585.9 429.9Z"/>
<path fill="#8664a2" d="M609.7 323.3 612.2 323.2 614.4 323.1 622.2 324.1 630 325.1 627.5 325.1 624.7 325.2 617.2 324.2ZM626 324.4 626.6 324.5 627.2 324.7 635.8 326 644.5 327.5 643.9 327.3 643.1 327.1 634.5 325.7Z"/>
<path fill="#7a5e94" d="M615.5 323.1 617.5 323.2 619.2 323.3 627.3 324.4 635.5 325.5 633.5 325.3 631.2 325.2 623.3 324.1Z"/>
<path fill="#946eb4" d="M620.1 323.4 621.6 323.6 622.9 323.8 631.3 324.9 639.7 326.2 638.2 325.9 636.4 325.6 628.2 324.5Z"/>
<path fill="#8e6aac" d="M623.5 323.9 624.6 324.1 625.6 324.3 634.1 325.5 642.7 326.9 641.6 326.7 640.4 326.4 631.9 325.1Z"/>
<path fill="#8c68aa" d="M627.4 324.7 627.6 324.8 627.7 324.8 636.4 326.2 645.1 327.7 645 327.7 644.7 327.6 636 326.1ZM562.7 410.7 572.7 407.3 582.4 403.7 582.7 410.7 582.6 418 572.9 421.5 563 424.7 563.1 417.6Z"/>
<path fill="#462e68" d="M360.6 318.9 360.8 318.9 361.2 318.9 352.1 321.2 343.4 324.3 343 324.3 342.8 324.4 351.5 321.2Z"/>
<path fill="#482c70" d="M361.5 318.8 362.2 318.8 363.2 318.7 354.1 320.9 345.4 323.9 344.4 324.1 343.7 324.2 352.4 321.1Z"/>
<path fill="#482e70" d="M363.7 318.6 365.1 318.6 366.6 318.5 357.7 320.4 349 323.4 347.4 323.6 346 323.8 354.7 320.8ZM380.2 519.2 386.5 519.3 393 519.4 392.4 527.3 391 535.7 384.5 535.6 378.2 535.5 379.6 527.2ZM497.1 662.6 502.8 661.9 508.6 661.5 508.6 666.1 508.7 670.5 503.4 670.8 498.2 671.4 497.6 667.1ZM638 702.6 639.8 702.4 641.4 702.1 632.8 703.2 624.2 704.1 622.7 704.2 621.1 704.3 629.5 703.6ZM578.5 703.7 580.8 704.1 582.9 704.5 575.6 704.8 568.5 705.1 566.7 704.8 564.8 704.5 571.6 704.1Z"/>
<path fill="#4e327c" d="M367.5 318.5 369.5 318.5 371.6 318.6 362.8 320.1 354.3 322.8 352 323.1 350 323.3 358.5 320.3ZM538.5 706 539.8 706.1 541.1 706.3 534.9 706.8 528.8 707.3 528.1 707.2 527.3 707.2 532.9 706.6Z"/>
<path fill="#482e72" d="M372.8 318.6 375.4 318.8 378.1 319.1 369.6 320.3 361.3 322.4 358.3 322.5 355.6 322.7 364 320.1ZM345.4 356.4 350.9 355.9 356.9 355.9 353.6 363.9 351.5 372.6 345.7 373.2 340.5 374 342.3 364.9ZM332.2 410 336 409 340.3 408 342.5 417.9 345.1 427.9 340.6 428.7 336.6 429.6 334.2 419.8ZM371.2 633.3 379 632.2 387.2 630.5 387 638.7 387.6 646.4 379.3 648.6 371.3 650.2 370.7 642.1ZM489.4 686.2 493.9 685.4 498.1 684.8 498.9 688 499.8 691.1 496.1 691.4 492.4 691.9 490.9 689.2ZM523.8 700.1 526.4 700.3 528.9 700.6 526.6 702.2 524.2 703.7 522.3 703.6 520.4 703.5 522.1 701.9ZM536.7 701.5 539.4 701.8 542 702.2 537.6 703.4 533.5 704.5 531.7 704.3 529.9 704.2 533.3 702.9ZM485.7 705.8 487.2 705.6 488.7 705.5 492.8 706.3 497 707 496.1 707.1 495.2 707.2 490.4 706.5ZM519.9 707.4 520.6 707.4 521.3 707.4 516.5 707.8 511.8 708 511.7 708 511.6 708 515.7 707.8Z"/>
<path fill="#50327a" d="M379.6 319.3 382.7 319.7 386 320.3 378 321.5 370.1 323.2 366.3 322.7 362.9 322.5 371.1 320.5ZM377.6 327.4 382.6 328.8 387.8 330.3 381.4 333 375.2 336.4 369.6 335 364.2 334 370.7 330.2ZM473.9 654 484.1 651.7 492.3 649.9 493 655 493.7 659.8 486.8 661.3 478.3 663.2 476.1 658.7ZM592.3 705.6 593.6 705.7 594.7 705.8 586.4 706.1 578.1 706.3 577.2 706.3 576.2 706.1 584.2 705.9Z"/>
<path fill="#4a3072" d="M387.8 320.7 391.4 321.5 395.3 322.5 387.9 323.6 380.6 325.3 376.2 324.3 372 323.5 379.8 321.8ZM357.7 463 363.1 462.6 368.9 462.2 371.6 475.6 373.9 489.1 368.1 489.1 362.5 489.1 360.3 476.2ZM654.4 698.6 657.1 698.2 659.5 697.5 651.4 700.1 643.2 701.8 641 702 638.5 702.2 646.6 700.7ZM511.3 673.6 516.3 673.9 521.4 674.4 520.8 678.3 520.2 682 515.7 681.6 511.1 681.4 511.2 677.6ZM585 691.7 590 693.6 594.8 695.3 589.1 696.4 583.3 697.3 579.2 696 574.9 694.6 579.9 693.2ZM625.7 702.8 628.6 702.9 631.3 703 623.2 703.7 615.2 704.3 612.8 704.1 610.3 703.8 618 703.4ZM618.4 704.5 619.5 704.4 620.5 704.3 611.8 705 603.2 705.5 602.4 705.5 601.4 705.5 609.9 705.1Z"/>
<path fill="#4c3274" d="M397.3 323 401.5 324.3 405.9 325.7 399.2 327 392.6 328.8 387.6 327.2 382.9 325.8 390 324.2ZM598.7 686.6 604.6 689 610.2 691.1 604.7 692.9 599 694.4 594 692.5 588.8 690.5 593.8 688.7Z"/>
<path fill="#54367c" d="M408.1 326.5 412.8 328.2 417.7 330.1 411.8 331.7 406 333.7 400.5 331.6 395.2 329.6 401.6 327.9ZM462.6 605.6 475.4 602.9 487.2 600.8 487.5 607.5 488 614 476.4 616.2 463.3 619 462.8 612.4Z"/>
<path fill="#624290" d="M433.4 336.5 439 338.9 444.8 341.3 440.6 344.1 436.6 347.1 430.1 344.2 423.8 341.4 428.6 338.8ZM531.5 618.7 543 620.9 556 623.7 554.8 629.8 553.2 635.7 540.7 633 530.2 630.8 530.9 624.8Z"/>
<path fill="#6a469a" d="M447.7 342.5 453.7 344.8 460 347.1 456.6 350.6 453.5 354.3 446.6 351.5 439.9 348.6 443.8 345.4ZM466.9 564.6 476.9 562.9 486.8 561.6 486.7 569 486.6 576.3 475.8 578.1 464.7 580.2 465.8 572.5Z"/>
<path fill="#6a4898" d="M463.7 348.1 472.1 350.2 480 352 477.7 356.1 475.3 360.5 465.6 358.2 457 355.6 460.2 351.8Z"/>
<path fill="#9076b6" d="M498.2 355.8 503.4 356.5 508.7 356.8 508.6 361.6 508.6 366.6 502.8 366.2 497.1 365.4 497.6 360.5ZM491.6 519.4 499.7 519.4 507.9 519.4 507.9 526.8 507.9 534.3 499.8 534.3 491.5 534.4 491.5 526.9ZM653.4 577.6 659.1 576.9 664.4 576.2 667.4 586.2 670.5 596.2 665.3 597.1 659.7 597.9 656.5 587.8Z"/>
<path fill="#78529e" d="M511.3 356.8 516.6 356.6 521.8 356 522.4 360.6 522.9 365.5 517.2 366.3 511.4 366.6 511.4 361.6Z"/>
<path fill="#78549a" d="M524.4 355.6 529.9 354.5 536.3 353.2 538.2 357.4 540.2 361.8 532.3 363.6 525.8 365 525.1 360.2Z"/>
<path fill="#5c4870" d="M539.9 352.4 547.8 350.6 556.1 348.7 559.7 352.3 562.9 356.1 554.3 358.6 544.7 360.8 542.2 356.5Z"/>
<path fill="#926eb2" d="M559.9 347.7 566.1 345.6 572 343.4 575.9 346.3 579.8 349.4 573.2 352.2 566.3 354.8 563.2 351.1Z"/>
<path fill="#8e6caa" d="M574.9 342.3 580.6 340.1 586 337.9 590.8 340.2 595.6 342.8 589.4 345.4 583 348.1 579 345Z"/>
<path fill="#9a74b8" d="M588.7 336.9 593.9 334.9 598.8 333.2 604.4 335 609.9 337.2 604.3 339.2 598.5 341.6 593.7 339.1Z"/>
<path fill="#906cac" d="M601.2 332.3 605.9 330.8 610.3 329.5 616.5 331.1 622.7 333.1 617.8 334.5 612.6 336.2 607 334.1Z"/>
<path fill="#9a72ba" d="M612.4 329 616.4 328 620.2 327.3 627.1 328.7 634 330.5 629.7 331.4 625.1 332.4 618.8 330.5Z"/>
<path fill="#9870ba" d="M622 327 625.5 326.5 628.7 326.2 636.2 327.6 643.6 329.4 640 329.7 636.1 330.2 629.1 328.4Z"/>
<path fill="#8664a4" d="M630.3 326.1 633.2 326 635.9 326 643.8 327.6 651.6 329.6 648.6 329.4 645.4 329.4 637.9 327.5Z"/>
<path fill="#906ab2" d="M637.1 326.1 639.5 326.3 641.6 326.5 649.8 328.3 657.9 330.7 655.5 330.2 653 329.8 645.1 327.7Z"/>
<path fill="#8460a0" d="M642.6 326.7 644.4 327 646 327.4 654.3 329.4 662.8 331.9 661 331.5 659 331 650.8 328.5Z"/>
<path fill="#8a64a8" d="M646.7 327.5 647.9 327.9 649 328.2 657.5 330.4 666.2 332.8 665 332.5 663.6 332.1 655.1 329.6Z"/>
<path fill="#8260a0" d="M649.5 328.4 650.3 328.7 650.9 328.9 659.5 331 668.2 333.4 667.6 333.2 666.7 333 658 330.6Z"/>
<path fill="#8e66ae" d="M651.1 329 651.4 329.1 651.5 329.1 660.2 331.3 669 333.6 668.9 333.6 668.5 333.5 659.7 331.1Z"/>
<path fill="#60488e" d="M337 327.5 337.2 327.5 337.5 327.4 331 333.1 325.8 340.1 325.5 340.3 325.4 340.4 330.5 333.3ZM327 343 328.6 342.2 330.4 341.4 325.8 349.3 322.1 357.9 320.7 358.9 319.6 359.9 322.9 351.1ZM315.5 370 315.6 369.5 315.9 368.9 314.8 378.5 314.5 388.2 314.3 388.9 314.2 389.5 314.6 379.7ZM316.1 368.5 316.5 367.7 317.2 366.9 315.8 376.2 315.3 385.9 314.9 386.9 314.6 387.8 314.9 378.1ZM310.6 644.7 311.7 646 313.1 647.3 313.8 656.8 315.7 666 314.1 664.9 312.8 663.9 311.3 654.4ZM315 670.4 316.5 671.2 318.4 672.1 324 679.1 330.6 685 328.3 684.5 326.3 684 319.9 677.9ZM379.6 689.2 385.5 687.5 391.8 685.5 397.2 688.4 402.8 690.7 397.2 692.7 391.8 694.3 385.6 692.1ZM404.2 701.4 408 700.5 412 699.4 418.6 700.1 425.2 700.7 421.7 701.6 418.5 702.3 411.4 701.9ZM425.4 705.7 426.5 705.7 427.7 705.6 435.8 705.9 443.8 706.2 442.8 706.3 441.8 706.4 433.6 706ZM490.9 708 491.1 707.9 491.3 707.9 499.2 708 507.1 708 507.1 708 507 708 499 708ZM500.4 707.4 501.1 707.4 501.9 707.4 505.3 707.8 508.7 708 508.6 708 508.5 708 504.5 707.8Z"/>
<path fill="#4a2e78" d="M337.8 327.3 338.5 327.1 339.5 326.9 332.7 332.4 327.2 339.2 326.5 339.7 326 340 331.2 333ZM330.5 495.1 334 495.4 337.7 495.6 338.5 503.8 338.8 511.9 334.9 511.7 331.2 511.4 331 503.3ZM317.7 516.4 319.7 516.6 322.1 516.8 321.7 525 321 533.3 318.8 533.2 316.8 533 317.4 524.7ZM311.9 538.9 312.1 538.9 312.7 539 312.1 547.6 311.6 556.4 311.1 556.1 310.9 556 311.4 547.4Z"/>
<path fill="#462e66" d="M340.1 326.8 341.4 326.5 343 326.2 335.8 331.3 330 337.8 328.7 338.4 327.6 339 333.2 332.2ZM314.5 446.4 315 446 315.7 445.5 316 454.2 316.3 462.9 315.4 463.3 314.6 463.6 314.5 455ZM309.3 615.3 310 616.3 310.9 617.5 310.3 627.1 310 636.9 309.3 635.8 308.7 634.8 308.9 625ZM400.5 666.2 408.6 662.8 416.8 659.3 420.2 664 423.7 668.3 416.1 671.7 408.7 674.9 404.5 670.8ZM324.7 685.8 324.9 685.9 325.2 686 332.9 690.7 341 694.5 340.6 694.4 340.5 694.4 332.3 690.5ZM349.8 697.6 351.2 697.9 352.7 698.2 361.4 700.7 370.4 702.3 368.9 702.1 367.7 701.9 358.6 700.1ZM409.7 691.2 415.4 689 421.3 686.6 426.2 688.7 431.2 690.5 426 692.5 421 694.3 415.3 692.9ZM399.3 704.6 400.3 704.7 401.4 704.7 410.1 705.1 418.6 705.5 417.7 705.5 416.8 705.4 408.2 705ZM402.1 704.8 403.5 704.8 405 704.8 413.4 705.1 421.7 705.4 420.3 705.4 419.2 705.5 410.7 705.1ZM478.9 706.4 480.2 706.3 481.5 706.2 487.1 706.8 492.7 707.3 491.9 707.4 491.1 707.4 485.1 707ZM489.5 705.4 491 705.3 492.6 705.1 496 706.1 499.4 706.9 498.4 707 497.4 707 493.4 706.3ZM501.8 704.6 503.5 704.5 505.2 704.5 506.1 705.7 507.1 706.7 506 706.7 505 706.7 503.3 705.8ZM498.7 707.5 499.4 707.5 500.1 707.5 504.3 707.8 508.4 708 508.3 708 508.2 708 503.5 707.9ZM510.2 707.2 511 707.2 511.8 707.2 511.1 707.7 510.3 708 510.2 708 510 708 510.1 707.7Z"/>
<path fill="#482e74" d="M343.9 326.1 346 325.8 348.3 325.5 340.8 330.1 334.4 336.2 332.4 336.9 330.7 337.5 336.6 331.1ZM349.6 325.4 352.4 325.1 355.4 324.8 347.8 329.1 341 334.6 338.1 335.2 335.5 335.8 342 329.9ZM320.8 363.9 322.6 362.8 324.7 361.7 322.4 370.6 321.3 379.9 319.5 381.1 318 382.4 318.7 372.8ZM317.9 389.5 319.4 388.2 321.2 387 321.7 396.6 322.6 406.2 320.7 407.4 319 408.6 318.3 399.1ZM319 443.4 320.6 442.6 322.4 441.7 323.8 451 325.2 460.2 322.8 460.9 320.8 461.5 319.9 452.5ZM309.1 587 309.2 587.1 309.5 587.4 308.9 596.7 308.4 606.1 308.2 605.7 308.2 605.6 308.6 596.2ZM314.5 592.1 316.1 593.3 318.1 594.6 316.4 604.1 315 613.6 313.4 612.3 312.1 611 313.2 601.5ZM307.8 639.5 307.8 639.6 307.9 640 308.5 649.9 309.5 659.8 309.4 659.5 309.3 659.4 308.3 649.5ZM347.6 697 348.3 697.2 349.3 697.4 358.1 700 367.2 701.8 366.3 701.6 365.6 701.4 356.4 699.6ZM396.5 695.7 401.6 694.1 407 692.2 412.7 693.8 418.6 695.2 413.8 696.8 409.3 698.2 402.9 697.1ZM371.7 702.2 371.8 702.3 372.2 702.3 381.5 703.3 390.7 704 390.4 704 390.3 703.9 381 703.2ZM405.9 704.8 407.7 704.7 409.7 704.6 417.7 704.8 425.6 705.1 423.9 705.2 422.4 705.3 414.2 705.1ZM456.3 700.6 459.4 699.9 462.6 699.1 468 700.4 473.2 701.6 470.3 702.1 467.5 702.5 461.8 701.5ZM450.2 706.3 451.3 706.2 452.5 706.1 460.1 706.4 467.6 706.8 466.6 706.9 465.7 707 458 706.7ZM504 699.7 506.7 699.6 509.3 699.5 509.4 701.5 509.5 703.3 507.5 703.3 505.5 703.3 504.8 701.6ZM519.1 704.5 520.8 704.6 522.5 704.7 520.1 705.8 517.6 706.7 516.6 706.7 515.6 706.7 517.3 705.8ZM490.4 708 490.5 708 490.5 708 498.8 708 507 708 507 708 507 708 498.7 708ZM502.3 707.4 503 707.4 503.8 707.3 506.4 707.8 509 708 508.9 708 508.8 708 505.5 707.8Z"/>
<path fill="#422a6a" d="M357.1 324.8 360.6 324.8 364.4 325 357 328.6 350.1 333.4 346.1 333.8 342.6 334.3 349.5 328.9ZM315.3 370.6 315.3 370.5 315.4 370.2 314.5 379.9 314.2 389.7 314.2 390 314.2 390.1 314.5 380.3ZM313.9 446.9 314 446.8 314.3 446.5 314.3 455.2 314.3 463.7 313.9 463.9 313.8 463.9 313.8 455.4ZM314.6 469.9 315.5 469.7 316.6 469.4 316.8 478.6 317 487.3 315.7 487.2 314.6 487.1 314.7 478.6ZM316.3 539.4 318.2 539.6 320.4 539.8 319.4 549.2 318.2 559.4 316.3 558.6 314.7 557.9 315.5 548.4ZM311.4 618.1 312.7 619.4 314.2 620.7 313.3 630.4 313 640.1 311.6 638.8 310.5 637.5 310.8 627.8ZM308.8 642 309.4 643 310.2 644.1 310.8 653.9 312.2 663.4 311.3 662.4 310.6 661.6 309.4 651.9ZM339 656.8 344.7 657.5 351 657.9 353.7 665.7 357.6 672.7 351.4 672.8 345.6 672.5 341.5 665ZM372.5 655.9 380.4 654 388.6 651.7 390.8 658.2 393.8 663.9 386 666.7 378.4 669 375 662.8ZM331.6 687.8 333.6 688.3 336 688.8 343.6 693.3 351.6 697 349.3 696.5 347.4 696.1 339.3 692.3ZM344.8 690.5 348.4 691 352.3 691.6 359.4 695.8 366.9 698.7 363.3 698.7 359.9 698.5 352.2 694.9ZM449.5 661.2 457.8 658.1 468.3 655.3 470.8 659.9 473.4 664.3 463.4 666.7 455 669.3 452.2 665.4ZM365.8 700.3 369.1 700.3 372.6 700.2 380.4 701.7 388.3 702.6 385.1 702.9 382.3 703 374 702ZM410.7 704.5 413 704.3 415.4 704 423 704.2 430.5 704.5 428.5 704.8 426.5 705 418.7 704.8ZM428.4 705.5 429.9 705.4 431.5 705.3 439.2 705.5 446.9 705.8 445.6 706 444.4 706.1 436.4 705.8ZM442.7 703.5 445.1 703 447.7 702.5 454 703.1 460.2 703.7 458.1 704.1 456.1 704.4 449.4 703.9ZM464.3 698.8 468.3 698 472.4 697.3 476.6 698.9 480.5 700.5 477.6 701 474.6 701.4 469.7 700.1ZM510.9 692.7 514.4 692.8 517.9 693 517.2 695.6 516.5 698 513.6 697.9 510.7 697.9 510.8 695.4ZM484.5 701.5 487.2 701.1 489.8 700.8 492.3 702.5 494.8 703.9 492.9 704.1 491.1 704.2 487.8 702.9ZM491.1 700.7 493.6 700.4 496.2 700.2 497.9 702 499.6 703.6 497.7 703.7 495.8 703.8 493.4 702.3ZM497.5 700.1 500.1 699.9 502.7 699.7 503.6 701.7 504.5 703.4 502.6 703.4 500.6 703.5 499 701.9ZM497.5 704.8 499.2 704.7 500.9 704.6 502.7 705.8 504.4 706.7 503.4 706.8 502.4 706.8 499.9 705.9ZM514.8 704.4 516.5 704.5 518.2 704.5 516.7 705.7 515 706.7 514 706.7 512.9 706.7 513.9 705.7ZM531.3 705.3 532.8 705.5 534.3 705.6 529.5 706.4 524.8 707 523.9 707 523 706.9 527.2 706.2ZM508.2 707.2 509 707.2 509.8 707.2 509.9 707.7 510 708 509.8 708 509.7 708 508.9 707.8Z"/>
<path fill="#442c6c" d="M366.4 325.2 370.7 325.9 375.2 326.9 368.3 329.7 361.6 333.7 356.8 333.3 352.2 333.3 359.1 328.6ZM500.3 684.6 504.6 684.2 508.9 684.1 509 687.4 509.1 690.6 505.3 690.7 501.6 690.9 500.9 687.8ZM523.3 704.8 525 704.9 526.6 705 523.4 706 520.1 706.8 519.2 706.8 518.1 706.8 520.7 705.9ZM550.4 707.3 550.9 707.3 551.3 707.4 543.1 707.6 535 707.7 534.8 707.7 534.5 707.7 542.4 707.5ZM551.4 707.4 551.8 707.4 552 707.4 543.7 707.6 535.5 707.7 535.3 707.7 535.1 707.7 543.3 707.6Z"/>
<path fill="#8068ae" d="M390.5 331.2 396 333.2 401.8 335.5 396.2 338.2 390.8 341.6 384.4 339.3 378.2 337.2 384.3 333.9Z"/>
<path fill="#9076ba" d="M437.1 351.1 444.1 354.2 451.2 357.2 448.3 361.4 445.4 365.9 437.5 362.4 429.8 358.9 433.4 354.8ZM469.9 541 478.5 540.6 487.2 540.2 487.1 548.2 486.9 556 477.3 557.2 467.8 558.7 468.9 549.9Z"/>
<path fill="#6e4898" d="M478.2 365 486.7 367 493.7 368.5 493 373.7 492.3 379.2 484.1 377.3 473.8 375 476.1 369.9Z"/>
<path fill="#ccb4da" d="M496.7 369.1 502.6 370 508.5 370.4 508.5 375.8 508.4 381.4 502 380.9 495.7 379.9 496.2 374.4Z"/>
<path fill="#7c589c" d="M526.3 368.7 533.2 367.2 541.7 365.3 543.9 370.1 546.1 375.2 535.9 377.5 527.7 379.3 527 373.9Z"/>
<path fill="#a48cc2" d="M546.6 364.2 556.6 361.8 565 359.1 567.8 363.4 570.5 368 562.2 371.1 551.7 373.9 549.2 368.9Z"/>
<path fill="#906eaa" d="M568.6 357.7 575.7 354.9 582.6 351.9 586.3 355.6 589.8 359.7 582.2 363 574.4 366.3 571.6 361.9Z"/>
<path fill="#f0e6f4" d="M586 350.5 592.6 347.6 599 344.9 603.5 348.1 607.9 351.7 600.8 354.8 593.6 358 589.8 354.1ZM644.5 360.7 651.5 359.1 658.1 358.2 661.9 365.3 664.6 373.2 657.8 373.6 650.7 374.5 648.1 367.2ZM610.1 413.9 619 411.1 627.5 408.8 626 418 623.8 427.5 615.5 429.3 606.9 431.5 608.8 422.5ZM651.1 404.9 658.2 404.7 664.7 405.1 662.5 415.2 659.6 425.5 653.3 425 646.5 424.9 649.1 414.8Z"/>
<path fill="#9c78ba" d="M602.1 343.6 608.1 341.2 613.9 339 619.2 341.9 624.4 345.2 618 347.6 611.3 350.3 606.8 346.7Z"/>
<path fill="#9a74ba" d="M616.7 338 622.1 336.2 627.3 334.7 633.4 337.4 639.3 340.6 633.6 342.2 627.5 344.1 622.2 340.8ZM631.7 407.8 639.8 406.3 647.5 405.2 645.5 414.9 642.9 425 635.6 425.6 627.8 426.7 630.1 417.1Z"/>
<path fill="#906aac" d="M629.8 334.1 634.5 333 639.1 332.1 645.7 334.8 652.3 338.3 647.3 339 642 340 636 336.7Z"/>
<path fill="#74568e" d="M650.8 331.2 654.2 331.3 657.3 331.7 665 335.2 672.5 339.5 669.1 339 665.4 338.4 658.2 334.3ZM605.3 438.3 613.7 436.3 621.9 434.7 619 444.7 616.2 454.9 608.4 456.1 600.4 457.5 602.9 447.8Z"/>
<path fill="#9066b2" d="M658.7 331.9 661.5 332.4 663.9 332.9 672 336.5 679.4 341 676.9 340.4 674 339.8 666.6 335.5Z"/>
<path fill="#8c62ae" d="M665.1 333.2 667.2 333.6 669 334.1 677 337.7 684.3 342.4 682.5 341.9 680.5 341.3 673.1 336.7Z"/>
<path fill="#825ca4" d="M669.8 334.3 671.3 334.6 672.5 335 680.4 338.8 687.5 343.6 686.4 343.2 685 342.7 677.8 337.9Z"/>
<path fill="#8c62b0" d="M673 335.1 673.9 335.4 674.5 335.6 682.3 339.5 689.4 344.4 688.8 344.1 688 343.8 680.9 338.9Z"/>
<path fill="#8a60ac" d="M674.8 335.6 675.1 335.7 675.3 335.8 683 339.8 690 344.7 689.9 344.6 689.6 344.5 682.6 339.6Z"/>
<path fill="#442a6c" d="M322.3 346.3 322.4 346.2 322.6 345.9 319.5 354.6 316.9 363.5 316.8 363.7 316.7 363.8 319.3 355ZM317.6 366.4 318.7 365.5 320 364.4 318 373.4 317.4 383 316.3 384.2 315.6 385.3 316.1 375.7ZM314.5 394.9 314.8 394 315.3 393 315.5 402.6 315.9 412 315.3 412.9 314.8 413.8 314.6 404.5ZM323.2 494.4 325.9 494.6 328.9 494.9 329.4 503.1 329.5 511.3 326.4 511.1 323.5 510.8 323.5 502.6ZM362.1 542.8 367.7 543.1 373.7 543.3 371.3 556.7 368.4 570 362.5 569.5 357 568.8 359.7 555.7ZM392.8 650.3 401.5 647.2 410.3 643.7 412.1 649.8 414.6 655.4 406.1 659 397.9 662.4 394.9 656.7ZM312.4 668.4 313.2 669.1 314.3 669.9 319 677.6 325.4 683.7 323.9 683.3 322.6 682.8 316.5 676.5ZM326.8 674.5 330.5 675.2 334.6 675.9 340.7 682.2 347.2 687.9 343.2 687.3 339.6 686.7 332.9 681ZM384.7 698.6 389.2 697.6 394 696.4 400.6 697.8 407.1 698.8 402.9 700 398.9 700.9 391.8 700ZM377.8 703.2 379.5 703.4 381.4 703.5 390.1 704.2 398.7 704.6 397.1 704.5 395.6 704.5 386.7 704ZM425.2 695.2 430 693.5 435 691.7 440 693.2 445.1 694.6 440.8 696 436.7 697.3 430.9 696.3ZM397 704.4 397.2 704.4 397.4 704.4 406.4 704.9 415.2 705.4 415 705.4 414.9 705.4 406 704.9ZM446.2 706.8 446.8 706.7 447.5 706.6 455.6 706.9 463.7 707.2 463.1 707.3 462.7 707.3 454.4 707.1ZM478 702.3 480.6 702 483.2 701.6 486.7 703 490.1 704.3 488.3 704.5 486.5 704.7 482.4 703.5ZM493.4 705.1 495 705 496.7 704.9 499.3 706 501.8 706.8 500.8 706.9 499.8 706.9 496.6 706.1ZM495.6 707.7 496.2 707.6 496.8 707.6 502.4 707.9 507.9 708 507.8 708 507.8 708 501.7 707.9ZM518.1 707.3 518.9 707.3 519.6 707.4 515.5 707.8 511.5 708 511.4 708 511.3 708 514.7 707.8Z"/>
<path fill="#402866" d="M322.8 345.8 323.2 345.4 323.9 344.9 320.4 353.4 317.6 362.3 317.2 362.9 317 363.3 319.6 354.4ZM314.1 397.3 314.1 397.1 314.1 396.8 314.1 406.3 314.2 415.6 314.1 415.9 314.1 416 314.1 406.7ZM322.3 386.3 324.8 385.1 327.8 383.9 328.2 393.6 329.3 403.3 326.3 404.5 323.8 405.6 322.8 396ZM324.8 412.8 327.4 411.6 330.5 410.5 332.5 420.3 334.7 430 331.3 431 328.3 431.9 326.4 422.4ZM323.5 441.3 325.8 440.4 328.4 439.5 330.4 449 332.4 458.6 329.2 459.3 326.5 459.9 325 450.6ZM317.2 469.3 318.7 468.9 320.5 468.4 321.1 478.5 321.7 487.8 319.6 487.6 317.8 487.4 317.5 478.6ZM314.6 493.3 315.7 493.4 317.1 493.6 317.1 501.9 317 510.2 315.5 510 314.4 509.9 314.5 501.6ZM338.1 541.3 342.3 541.6 346.8 541.9 344.7 553.8 342.3 566.5 338.1 565.6 334.1 564.7 336.2 552.4ZM324.4 569.3 327.4 570.3 330.7 571.4 328.3 581 326 590.7 323.1 589.4 320.6 588.2 322.5 578.7ZM377.1 606.9 384.4 606.5 392.2 605.5 389.8 615 388 624.1 379.9 625.6 372.2 626.5 374.4 616.8ZM308.3 613.4 308.6 614 309.1 614.8 308.6 624.5 308.5 634.3 308.1 633.5 307.9 632.9 308 623.1ZM339.8 631.1 345 632.1 350.8 632.9 349.7 642.5 349.9 651.7 343.8 651 338.3 650.2 338.6 640.8ZM308 640.2 308.3 640.8 308.6 641.6 309.2 651.5 310.4 661.2 309.9 660.5 309.6 660 308.6 650.1ZM313.9 647.9 315.7 649.3 318 650.6 319 659.9 321.6 668.6 318.9 667.6 316.7 666.5 314.7 657.5ZM311.1 667 311.5 667.4 312 668 316 676.2 322 682.7 321.1 682.3 320.4 682.1 314.7 675.4ZM336.8 676.2 341.5 676.7 346.7 677.3 352.5 683.5 358.7 688.8 353.8 688.6 349.3 688.2 342.8 682.5ZM395 684.3 401.6 681.8 408.4 679 413 682.2 417.7 684.9 411.6 687.4 405.7 689.7 400.2 687.3ZM346.8 696.7 346.9 696.8 347.3 696.9 356.2 699.5 365.3 701.3 365 701.2 364.8 701.2 355.6 699.3ZM353.6 698.4 355.5 698.9 357.7 699.3 366.2 701.5 374.9 702.9 372.9 702.7 371.2 702.5 362.3 700.9ZM372.4 702.4 373.1 702.5 374 702.7 383.2 703.6 392.3 704.2 391.5 704.1 390.9 704 381.7 703.3ZM397.7 704.4 398.2 704.5 398.9 704.6 407.8 705 416.5 705.4 415.9 705.4 415.4 705.4 406.6 704.9ZM449.1 702.2 451.9 701.6 454.8 700.9 460.4 701.8 466.1 702.7 463.6 703.1 461.3 703.5 455.3 702.8ZM468.7 707.5 469.1 707.5 469.6 707.4 477.6 707.6 485.5 707.8 485.2 707.9 484.9 707.9 476.8 707.7ZM506.1 707.3 507 707.3 507.8 707.2 508.7 707.8 509.6 708 509.5 708 509.4 708 507.8 707.8ZM512.2 707.2 513 707.2 513.9 707.2 512.2 707.7 510.6 708 510.5 708 510.4 708 511.3 707.7ZM514.3 707.2 515 707.2 515.8 707.3 513.4 707.8 510.9 708 510.8 708 510.7 708 512.5 707.7Z"/>
<path fill="#442c6e" d="M324.2 344.6 325.1 344 326.3 343.3 322.3 351.5 319.2 360.4 318.4 361.2 317.8 362 320.7 353.1ZM311.5 589.5 312.5 590.4 313.8 591.5 312.5 600.9 311.5 610.4 310.5 609.3 309.8 608.2 310.5 598.8ZM432.3 705.2 434.1 704.9 436 704.6 443.4 704.9 450.7 705.3 449.1 705.5 447.6 705.7 440 705.4ZM469.9 707.4 470.5 707.3 471.1 707.2 478.8 707.5 486.5 707.7 486 707.8 485.7 707.8 477.8 707.6ZM471.5 707.2 472.3 707.1 473.1 707 480.4 707.4 487.7 707.7 487.1 707.7 486.7 707.7 479.1 707.5ZM527 707.7 527.4 707.7 527.8 707.7 520.3 707.9 512.8 708 512.7 708 512.7 708 519.8 707.9Z"/>
<path fill="#462c72" d="M331.5 341 333.9 340.2 336.6 339.5 331.5 347 327.2 355.2 324.9 356.3 323 357.3 326.7 348.8ZM309.7 587.7 310.3 588.3 311 589 310.2 598.3 309.5 607.8 308.9 607 308.6 606.3 309.1 596.9ZM381.5 673.1 388.9 670.6 396.6 667.8 400.7 672.4 405.1 676.4 398 679.3 391.2 681.8 386.2 677.8ZM325.5 686.1 326.2 686.3 327.2 686.6 334.8 691.2 343 695 342 694.8 341.3 694.6 333.1 690.8ZM462 691.7 467.7 690.5 473.6 689.3 477.1 691.7 480.3 694 475.9 694.7 471.3 695.6 466.7 693.7Z"/>
<path fill="#4a3078" d="M338.2 339.1 341.6 338.4 345.4 337.8 339.9 344.8 335.1 352.7 331.5 353.6 328.5 354.7 333 346.5ZM334 358.5 338.2 357.5 342.9 356.7 339.8 365.4 338.1 374.5 333.7 375.4 329.8 376.4 331.3 367.3ZM318.3 566.7 320.5 567.7 323 568.7 321.2 578.1 319.4 587.5 317.3 586.3 315.5 585.2 316.9 575.9ZM320.6 625 323.5 626.3 326.9 627.6 325.7 637.3 325.3 646.9 322 645.6 319.1 644.2 319.6 634.6ZM414.9 641.8 424.1 638 433.4 634.2 434.8 640.3 436.6 646 427.7 649.8 418.9 653.6 416.6 648ZM421 657.4 429.6 653.7 438.3 649.9 440.8 654.9 443.5 659.6 435.4 663.1 427.5 666.6 424.2 662.2ZM476.5 688.7 482 687.6 487.1 686.6 488.8 689.5 490.5 692.2 486.6 692.9 482.4 693.6 479.6 691.2ZM421.3 705.7 421.4 705.8 421.6 705.8 430.2 706.2 438.7 706.6 438.5 706.6 438.5 706.6 429.9 706.2ZM445.1 706.8 445.5 706.8 445.9 706.8 454.2 707.1 462.5 707.3 462.1 707.4 461.8 707.4 453.5 707.1Z"/>
<path fill="#462c6e" d="M347.5 337.6 352 337.2 357 337.3 351.1 343.4 346 350.7 341.3 351.5 337 352.3 341.9 344.5ZM339.9 380.9 345.1 380.1 350.8 379.4 350.8 388.8 351.8 398.6 346.3 399.4 341.3 400.2 340.1 390.4ZM328.8 540.6 332.3 540.8 336.1 541.1 334.3 552.1 332.3 564.2 328.8 563.2 325.7 562.2 327.4 550.9ZM358.9 699.6 361.5 700 364.3 700.2 372.5 702 380.9 703.1 378.3 703 376 702.9 367.4 701.7ZM572.5 706.6 573.2 706.7 573.8 706.7 565.5 707 557.3 707.2 556.9 707.2 556.3 707.1 564.4 706.9ZM574.1 706.7 574.5 706.8 574.9 706.8 566.5 707.1 558.1 707.3 557.9 707.3 557.5 707.2 565.8 707ZM548.8 707.1 549.5 707.2 550.1 707.2 542.2 707.5 534.3 707.7 533.9 707.6 533.5 707.6 541.1 707.4ZM524.6 707.6 525.2 707.6 525.7 707.6 519.1 707.9 512.4 708 512.4 708 512.3 708 518.5 707.8ZM528.6 707.8 528.9 707.8 529.1 707.8 521 707.9 513 708 512.9 708 512.9 708 520.8 707.9Z"/>
<path fill="#4c3076" d="M359.6 337.5 365.1 338.3 370.9 339.5 365.3 344.6 360.1 350.7 354.1 350.3 348.6 350.4 353.7 343.3ZM363.7 496.8 369.4 496.9 375.3 497 376.6 505.3 377.2 513.3 371.2 513.2 365.5 513 365 505ZM365.5 519 371.2 519.1 377.2 519.2 376.5 527.1 375.1 535.4 369.2 535.3 363.5 535.2 364.8 526.9ZM532.9 686.6 538 687.5 543.5 688.6 540.4 691.1 537.6 693.5 533.4 692.8 529.5 692.1 531.2 689.4ZM584 704.7 585.9 704.9 587.7 705.2 580 705.4 572.4 705.7 570.9 705.5 569.3 705.2 576.6 704.9Z"/>
<path fill="#60408e" d="M408.1 353.3 415.6 356.7 423.3 360.3 419.9 365 416.5 370.2 408.2 366.4 400 362.9 404 357.8ZM702.6 644.3 703.6 642.9 704.4 641.4 703.5 650.7 701.3 659.3 700.3 660.5 699 661.8 701.3 653.3Z"/>
<path fill="#543876" d="M427.3 362.1 435.2 365.8 443.3 369.4 440.7 374.5 438.2 379.9 429.4 376 420.8 372.1 423.9 366.9Z"/>
<path fill="#8e72b4" d="M447.5 371.2 455.9 374.5 466.4 377.6 464.1 383 462 388.7 451.6 385.4 442.6 381.8 445 376.3Z"/>
<path fill="#704a98" d="M495.3 384.1 501.8 385.2 508.4 385.6 508.3 391.6 508.3 397.6 501.3 397.1 494.3 395.9 494.8 389.9Z"/>
<path fill="#745098" d="M511.6 385.7 518.2 385.2 524.7 384.2 525.2 390 525.6 396 518.7 397.1 511.7 397.7 511.7 391.6Z"/>
<path fill="#9c74bc" d="M553.5 377.8 564 374.8 572.4 371.5 574.9 376.6 577.3 382.1 568.3 385.6 558 388.9 555.8 383.2Z"/>
<path fill="#a27cc0" d="M576.5 369.8 584.5 366.4 592.4 362.9 595.7 367.6 598.8 372.8 590.4 376.5 581.7 380.2 579.1 374.9Z"/>
<path fill="#f2e8f4" d="M596.2 361.2 603.8 357.8 611 354.7 615.2 359.2 619.1 364.1 611.2 367.4 603 371 599.7 365.8Z"/>
<path fill="#9a78b8" d="M614.6 353.2 621.5 350.5 628.2 348 633.1 352.4 637.7 357.4 630.5 359.8 623 362.6 618.9 357.6Z"/>
<path fill="#8c6ca8" d="M631.4 346.9 637.6 345 643.5 343.5 649.1 348.1 654.5 353.5 648 354.7 641.2 356.4 636.4 351.3Z"/>
<path fill="#8866a6" d="M646.4 342.9 651.9 342 657 341.5 663.3 346.6 669 352.9 663.5 352.7 657.6 353.1 652.1 347.5Z"/>
<path fill="#8460a2" d="M659.5 341.4 664.2 341.5 668.5 341.9 674.9 347.7 680.8 354.3 676.4 353.7 671.6 353.1 665.8 346.7Z"/>
<path fill="#8860aa" d="M670.5 342.2 674.3 342.8 677.6 343.4 684 349.4 689.9 356 686.6 355.3 682.8 354.7 676.9 348Z"/>
<path fill="#906eb2" d="M679.1 343.7 681.9 344.4 684.4 345 690.8 351 696.6 357.7 694.2 357.1 691.4 356.4 685.5 349.7Z"/>
<path fill="#825aa4" d="M685.5 345.3 687.5 345.9 689.2 346.5 695.4 352.6 701 359.4 699.4 358.8 697.6 358.1 691.9 351.4Z"/>
<path fill="#7e56a0" d="M690 346.8 691.3 347.3 692.4 347.7 698.4 353.9 703.6 360.8 702.8 360.3 701.6 359.7 696.2 352.9Z"/>
<path fill="#8258a6" d="M692.8 347.9 693.6 348.2 694.1 348.5 700 354.7 705 361.8 704.6 361.4 704 361 698.8 354.1Z"/>
<path fill="#7a549c" d="M694.4 348.6 694.7 348.8 694.8 348.8 700.6 355.1 705.5 362.1 705.4 362.1 705.2 361.9 700.2 354.8Z"/>
<path fill="#baa4d4" d="M326 361.1 328.8 360 332.2 359 329.6 367.9 328.1 376.9 325 378 322.4 379.2 323.6 370ZM424.3 685.3 430.5 682.7 436.9 680 441 682.7 445.1 685.2 439.4 687.3 433.9 689.5 429.1 687.5Z"/>
<path fill="#bca6d2" d="M360.1 356.2 366.8 357.2 374 358.9 370.6 365.8 368.4 373.6 361.3 372.7 354.6 372.5 356.7 364Z"/>
<path fill="#583884" d="M377.7 359.9 385.3 362.4 393.3 365.4 390.3 371.6 388.2 378.6 380 376.1 372.2 374.3 374.4 366.7Z"/>
<path fill="#624092" d="M397.4 367 405.8 370.6 414.3 374.3 411.9 380.3 410.1 386.9 401.2 383.3 392.5 380 394.5 373.2Z"/>
<path fill="#402c56" d="M418.7 376.3 427.5 380.2 436.5 384.1 434.6 390.2 433.3 396.6 423.9 392.7 414.7 388.8 416.3 382.3ZM371.9 462.1 378.1 461.8 384.6 461.6 387.4 475 389.7 488.8 383.2 488.9 377 489 374.6 475.5Z"/>
<path fill="#c6b0d6" d="M441 386 450.3 389.7 460.5 393.1 459 399.3 457.8 405.7 447.7 402.3 438.1 398.5 439.3 392.1Z"/>
<path fill="#8e74b2" d="M466.7 394.7 479.2 397.4 489.8 399.6 489.1 405.9 488.5 412.4 477 410.1 464 407.3 465.2 400.9ZM463.3 412.2 476.4 415 488 417.3 487.5 424.1 487.2 431 475.3 428.8 462.6 426.2 462.8 419.1Z"/>
<path fill="#764ea0" d="M494 400.5 501.1 401.7 508.2 402.3 508.2 408.6 508.1 415.1 500.7 414.6 493.1 413.3 493.5 406.8ZM552.8 519.4 560.8 519.4 568.6 519.4 569 527.1 569.9 535.2 561.8 535 553.7 534.8 553.1 527Z"/>
<path fill="#967aba" d="M511.8 402.3 518.9 401.7 526 400.5 526.5 406.8 526.9 413.3 519.3 414.6 511.9 415.1 511.8 408.6Z"/>
<path fill="#9c84be" d="M530.2 399.7 540.8 397.5 553.2 394.8 554.8 401 556 407.4 543 410.2 531.5 412.4 530.9 406Z"/>
<path fill="#806498" d="M559.4 393.3 569.7 389.9 578.8 386.3 580.6 392.4 581.8 398.7 572.2 402.4 562.2 405.8 561 399.4Z"/>
<path fill="#9676b0" d="M583.3 384.4 592.3 380.7 601 376.9 603.3 382.9 605 389.3 595.8 393 586.5 396.9 585.2 390.5Z"/>
<path fill="#a47ec0" d="M605.2 375.1 613.6 371.5 621.8 368.2 624.7 374.2 626.8 380.9 618.3 384 609.5 387.5 607.7 381Z"/>
<path fill="#9c78b8" d="M625.7 366.7 633.4 363.9 640.9 361.6 644.4 368 646.9 375.2 639.1 377.1 631 379.5 628.8 372.7ZM587.2 401.8 596.6 398.1 605.8 394.4 606.3 401.6 606.1 409.4 596.8 412.7 587.4 416.3 587.5 408.9ZM632.1 384.9 640.3 382.7 648.1 381 648.7 389.4 648.4 398.3 640.6 399.5 632.5 401.3 632.7 392.8Z"/>
<path fill="#d2bcde" d="M675.3 358.4 680.2 359 684.6 359.7 688.6 367.4 691.1 375.7 686.9 375 682.1 374.4 679.4 366.1Z"/>
<path fill="#7e589e" d="M686.7 360 690.4 360.7 693.7 361.4 697.5 369.2 699.7 377.7 696.6 376.8 693.1 376.1 690.6 367.7Z"/>
<path fill="#684884" d="M695.2 361.7 697.9 362.5 700.1 363.2 703.5 371.2 705.6 379.9 703.5 379 701.1 378.1 698.9 369.6Z"/>
<path fill="#744e94" d="M701.1 363.6 702.9 364.3 704.3 365 707.4 373.2 709.1 382.3 707.9 381.3 706.4 380.4 704.5 371.6Z"/>
<path fill="#8a68ae" d="M704.9 365.3 705.9 365.9 706.7 366.5 709.6 374.9 711 384.2 710.4 383.5 709.6 382.7 708 373.5Z"/>
<path fill="#8054a4" d="M707 366.7 707.6 367.2 707.9 367.5 710.7 376.1 711.9 385.6 711.6 385.2 711.2 384.6 709.9 375.2Z"/>
<path fill="#7e54a2" d="M708.1 367.7 708.3 367.9 708.4 367.9 711 376.6 712.1 386.2 712.1 386.1 712 385.8 710.8 376.3Z"/>
<path fill="#462c70" d="M314.2 396.6 314.2 396.1 314.4 395.4 314.5 404.9 314.7 414.2 314.4 414.9 314.2 415.4 314.2 406.1ZM339.7 495.8 344 496 348.5 496.3 349.5 504.4 349.9 512.5 345.3 512.3 340.9 512.1 340.5 503.9ZM312.9 515.9 313.1 515.9 313.8 516 313.4 524.3 313 532.7 312.4 532.6 312.2 532.6 312.6 524.2ZM314.2 516 315.4 516.1 316.9 516.3 316.5 524.6 316 532.9 314.5 532.8 313.4 532.7 313.9 524.4ZM313.1 539 314.1 539.1 315.5 539.3 314.8 548.2 314 557.5 312.8 557 311.9 556.5 312.5 547.7ZM349.2 542 354.1 542.3 359.4 542.6 357.1 555.4 354.3 568.5 349.3 567.7 344.5 566.9 347 554.1ZM325.8 598.5 329.1 599.7 332.7 600.9 330.3 610.7 328.2 620.5 324.7 619.2 321.7 617.8 323.6 608.1ZM346.2 604.1 351.5 605 357.3 605.7 354.5 615.8 352.1 625.7 346.4 624.8 341.1 623.9 343.4 614ZM396.2 604.8 404.4 603 413 600.9 411.1 609.7 409.8 618.1 400.9 620.8 392.2 623.1 393.8 614.2ZM391.5 629.5 400.2 627 409.2 624 409 631.7 409.5 638.8 400.5 642.1 391.8 645.1 391.2 637.6ZM310.7 666.4 310.8 666.5 311 666.8 314.5 675.3 320.1 682 319.8 681.8 319.6 681.8 314.1 675ZM327.8 686.8 329.1 687.2 330.7 687.6 338.4 692.1 346.5 695.9 344.9 695.5 343.6 695.2 335.4 691.4ZM337.2 689.1 340 689.6 343.1 690.2 350.6 694.6 358.3 698.3 355.4 697.8 352.8 697.3 344.8 693.5ZM484.4 695.2 488.1 694.6 491.7 694.1 493.4 696.5 495 698.7 492.2 699 489.3 699.3 486.9 697.4ZM502.1 693 505.6 692.8 509.1 692.7 509.2 695.4 509.3 697.9 506.4 697.9 503.5 698 502.8 695.6ZM471.7 703.2 474.2 702.9 476.7 702.5 481.3 703.7 485.6 704.7 483.8 704.9 482.1 705.1 477.1 704.2ZM491.5 707.9 491.7 707.9 492.1 707.9 499.6 708 507.2 708 507.2 708 507.1 708 499.3 708ZM523.2 707.5 523.8 707.5 524.4 707.5 518.3 707.8 512.2 708 512.2 708 512.1 708 517.6 707.8ZM527.9 707.7 528.2 707.8 528.5 707.8 520.7 707.9 512.9 708 512.8 708 512.8 708 520.4 707.9Z"/>
<path fill="#422a68" d="M315.6 392.5 316.3 391.3 317.3 390.1 317.7 399.7 318.3 409.2 317.2 410.4 316.3 411.5 315.8 402ZM314.1 422.7 314.1 422.6 314.2 422.3 314.3 431.3 314.3 440.1 314.1 440.3 314 440.4 314 431.7ZM535 705.7 536.5 705.8 537.8 706 532.3 706.6 526.9 707.2 526.1 707.1 525.2 707.1 530.1 706.4ZM541.7 706.3 542.8 706.5 544 706.6 537.2 707 530.6 707.4 529.9 707.3 529.2 707.3 535.4 706.8Z"/>
<path fill="#7c64ae" d="M329.4 383.3 333.2 382.3 337.5 381.3 337.8 390.9 339 400.7 334.8 401.7 331 402.8 329.9 393ZM319.6 672.6 322.1 673.4 325.1 674.2 331.2 680.7 337.9 686.4 334.7 685.8 331.9 685.3 325.3 679.4Z"/>
<path fill="#4a3074" d="M353.9 379.1 360.4 379.2 367.5 379.8 367.3 388.7 368.1 398.1 361.2 397.9 354.8 398.2 353.9 388.5ZM417.4 599.7 426.3 597 435.5 594.2 434.1 602.3 433 610 423.6 613.4 414.3 616.6 415.6 608.3ZM537.5 695.4 541.5 696.1 545.5 696.8 541.6 698.6 538 700.2 535 699.8 532.1 699.4 534.8 697.5ZM564 705.5 565.4 705.7 566.8 705.9 559.3 706.2 551.9 706.6 550.8 706.5 549.7 706.3 556.9 705.9ZM575 706.8 575.2 706.8 575.3 706.8 566.8 707.1 558.4 707.3 558.4 707.3 558.2 707.3 566.6 707.1Z"/>
<path fill="#846ab2" d="M371.3 380.4 379 382 387.3 384.2 386.8 392.3 387.3 401 379.3 399.4 371.7 398.4 371 389.1Z"/>
<path fill="#886eb2" d="M391.5 385.5 400.3 388.6 409.3 392 408.8 399.5 409.1 407.5 400.1 404.5 391.5 402.1 391.1 393.5ZM681.4 654.5 685.8 653.4 689.7 652.1 687.8 660.7 684.4 668.6 680.2 669.6 675.4 670.5 679.1 662.9Z"/>
<path fill="#8c72b2" d="M437.5 403.5 447.2 407.2 457.2 410.7 456.9 417.5 457 424.6 447.1 421.4 437.3 417.9 437.2 410.5Z"/>
<path fill="#724a9a" d="M492.8 418.2 500.6 419.5 508.1 420 508.1 426.8 508.1 433.6 500.3 433.1 492.1 431.9 492.4 425Z"/>
<path fill="#967abc" d="M511.9 420 519.4 419.5 527.2 418.2 527.6 425 527.9 431.9 519.7 433.1 511.9 433.6 511.9 426.8Z"/>
<path fill="#d0bade" d="M532 417.3 543.6 415.1 556.7 412.3 557.2 419.1 557.4 426.2 544.6 428.9 532.8 431 532.5 424.1Z"/>
<path fill="#9474ae" d="M610.3 392.6 619.2 389.2 627.9 386.2 628.5 394 628.3 402.3 619.6 404.8 610.7 407.8 610.9 399.9Z"/>
<path fill="#8a68a6" d="M651.8 380.4 659 379.6 665.8 379.4 666.4 388.3 665.8 397.8 659.2 397.6 652.1 398 652.5 388.9Z"/>
<path fill="#f0e6f2" d="M669 379.5 675.1 379.9 680.6 380.5 681 389.6 680.1 399.3 674.8 398.6 668.9 398 669.6 388.5Z"/>
<path fill="#8e64b2" d="M683.1 380.8 687.9 381.5 692.1 382.2 692.3 391.6 691.2 401.4 687.2 400.5 682.6 399.7 683.5 390Z"/>
<path fill="#8058a2" d="M694 382.6 697.5 383.5 700.5 384.4 700.4 394 699.3 403.9 696.4 402.9 693.1 401.9 694.1 392Z"/>
<path fill="#cab4da" d="M701.8 384.9 704.2 385.9 706.1 386.9 705.8 396.7 704.8 406.6 702.8 405.5 700.6 404.4 701.7 394.5ZM627.6 605.3 635.3 606.3 642.5 606.7 645.1 616.5 647.1 626 639.6 625.2 631.7 623.8 629.9 614.7Z"/>
<path fill="#865aac" d="M706.9 387.4 708.3 388.4 709.4 389.4 709.1 399.3 708.2 409.1 707 408.2 705.6 407.1 706.6 397.2Z"/>
<path fill="#764e98" d="M709.9 389.8 710.7 390.7 711.2 391.5 710.9 401.4 710.1 411.3 709.5 410.5 708.7 409.6 709.5 399.7ZM684.6 436.8 688.2 437.7 691.5 438.5 689.1 448.3 686.7 458 683 457.4 679 456.8 681.8 446.8Z"/>
<path fill="#78509c" d="M711.4 391.8 711.8 392.5 712 392.9 711.7 402.9 711.1 412.7 710.8 412.2 710.4 411.6 711.1 401.8ZM712.1 393.1 712.2 393.4 712.3 393.5 712 403.5 711.4 413.3 711.4 413.2 711.2 412.9 711.8 403.1Z"/>
<path fill="#4a2e74" d="M314.3 422.1 314.5 421.6 314.9 421 315.2 430 315.5 439 314.9 439.5 314.5 439.9 314.4 431.1ZM385.5 578.9 392.6 578.8 400 578.2 397.1 588.3 394.2 598.3 386.5 599.1 379.3 599.5 382.4 589.3ZM414.1 698.8 418.4 697.5 422.9 696.1 428.8 697.1 434.6 698 430.7 699.1 427 700.2 420.6 699.6ZM421.8 705.8 422.2 705.8 422.8 705.8 431.3 706.2 439.7 706.5 439.3 706.6 438.9 706.6 430.4 706.2ZM555.2 704.1 557.1 704.4 559 704.7 552.4 705.3 545.8 705.9 544.3 705.7 542.8 705.5 548.8 704.8ZM510.4 704.4 512.2 704.4 513.9 704.4 513.2 705.7 512.4 706.7 511.3 706.7 510.3 706.7 510.4 705.7ZM544.5 706.6 545.5 706.7 546.4 706.8 539.2 707.2 532.1 707.5 531.5 707.5 530.9 707.4 537.6 707ZM552.1 707.5 552.2 707.5 552.3 707.5 543.9 707.6 535.7 707.8 535.6 707.8 535.5 707.8 543.8 707.6Z"/>
<path fill="#4a2e76" d="M315.1 420.6 315.6 419.8 316.3 418.9 317 428 317.7 437.1 316.7 437.9 315.8 438.6 315.4 429.7ZM319.8 415.6 321.5 414.5 323.6 413.3 325.1 422.9 327 432.4 324.5 433.4 322.4 434.4 321 425ZM313.7 470.2 313.9 470.1 314.3 470 314.3 478.6 314.3 487 313.7 487 313.5 486.9 313.6 478.6ZM327.5 466.9 330.5 466.3 333.8 465.8 335.5 477.8 336.9 488.8 333.2 488.6 329.9 488.4 328.8 478.2ZM313.4 493.1 313.6 493.1 314.2 493.2 314.1 501.5 313.9 509.8 313.3 509.8 313.1 509.7 313.3 501.4ZM331.1 517.5 334.8 517.7 338.7 517.9 338.2 526.1 337.1 534.2 333.3 534 329.7 533.9 330.6 525.7ZM311.5 563.1 312.3 563.5 313.4 564.2 312.6 573.1 311.7 582.2 310.8 581.5 310.2 580.9 310.9 571.9ZM430.1 669.5 437.7 666.1 445.5 662.8 448.4 666.9 451.4 670.7 444.3 673.5 437.4 676.4 433.7 673.1ZM374.5 700.1 378.4 699.7 382.5 699 389.8 700.4 397 701.3 393.4 702 389.9 702.4 382.2 701.5ZM437.5 690.8 442.8 688.8 448.2 686.8 452.4 689 456.6 691 451.9 692.4 447.3 693.9 442.4 692.4ZM437.1 704.5 439.2 704.1 441.5 703.7 448.4 704.1 455.1 704.6 453.3 704.9 451.5 705.2 444.3 704.8ZM474.5 696.9 478.5 696.2 482.4 695.6 485.2 697.6 487.9 699.5 485 699.9 482 700.3 478.4 698.7ZM468 707.6 468.2 707.5 468.5 707.5 476.7 707.7 484.8 707.9 484.6 707.9 484.5 707.9 476.3 707.8ZM482.1 706.1 483.5 706 484.9 705.8 489.9 706.6 494.7 707.2 493.9 707.2 493.1 707.3 487.6 706.7ZM492.2 707.9 492.6 707.8 493 707.8 500.2 708 507.3 708 507.3 708 507.2 708 499.7 708ZM493.2 707.8 493.6 707.8 494.1 707.8 500.8 707.9 507.5 708 507.4 708 507.4 708 500.3 708ZM497.1 707.6 497.7 707.6 498.4 707.5 503.3 707.9 508.2 708 508.1 708 508 708 502.5 707.9ZM525.9 707.6 526.4 707.7 526.8 707.7 519.7 707.9 512.6 708 512.6 708 512.5 708 519.2 707.9Z"/>
<path fill="#422868" d="M316.7 418.4 317.8 417.3 319 416.2 320.1 425.6 321.4 434.9 319.8 435.8 318.3 436.7 317.5 427.6ZM342.5 574.4 347.2 575.3 352.1 576.1 349 586.2 345.9 596.2 341.1 595.3 336.8 594.2 339.7 584.3ZM360.3 606.1 366.7 606.7 373.5 607 370.8 616.9 368.6 626.7 361.7 626.6 355.2 626.1 357.5 616.1ZM354.4 691.8 358.8 692.1 363.5 692 370.3 695.3 377.2 697.7 372.9 698.3 368.8 698.6 361.4 695.8ZM440.2 678.7 446.8 676 453.7 673.3 456.8 676.6 460.1 679.8 453.9 681.9 448 684.1 444.1 681.5ZM423.7 702.6 426.8 701.9 430.1 701.1 436.6 701.5 443 702.1 440.2 702.7 437.6 703.2 430.7 702.9ZM506.1 704.4 507.8 704.4 509.6 704.4 509.6 705.7 509.7 706.7 508.7 706.7 507.6 706.7 506.8 705.7Z"/>
<path fill="#523480" d="M342.6 407.6 347.6 406.7 353.1 406 355.4 416 358.2 426.2 352.6 426.8 347.5 427.5 344.8 417.5ZM572.3 702.4 574.9 703 577.3 703.5 570.5 703.9 563.9 704.4 561.9 704 559.7 703.6 565.9 703Z"/>
<path fill="#543682" d="M356.1 405.6 362.4 405.1 369.2 405.2 371.3 415.1 374 425.2 367.3 425.4 361.1 425.9 358.4 415.7ZM538.3 677.7 545.5 679.3 553.3 681 549.5 683.9 545.9 686.7 539.9 685.4 534.3 684.3 536.2 681.1ZM590 701.1 593.2 701.9 596.3 702.6 589.3 702.9 582.4 703.2 579.8 702.7 577 702 583.4 701.5ZM622.3 704 622.6 704 622.7 704 613.9 704.8 605.2 705.4 605 705.4 604.8 705.4 613.5 704.8Z"/>
<path fill="#6c529a" d="M372.7 405.4 380.3 406.3 388.2 407.8 390 417.2 392.4 426.9 384.7 425.8 377.5 425.3 374.8 415.2ZM689.7 681.3 690 681.1 690.1 681 683.6 686.5 676.3 690.9 676.2 691 675.8 691.1 683.2 686.7Z"/>
<path fill="#8e74b8" d="M414.3 415.2 423.5 418.4 433 421.8 434 429.8 435.5 438.2 426.3 435.3 417.4 432.7 415.6 423.8ZM451.4 519.4 459.2 519.4 467.2 519.4 466.9 527 466.3 534.8 458.2 535 450.1 535.2 451 527.1Z"/>
<path fill="#6c489a" d="M437.8 423.5 447.5 426.9 457.3 430.1 458 437.6 459 445.3 449.5 442.5 440.1 439.6 438.8 431.4ZM533.3 581.7 544.5 583.5 556 585.8 556.8 593.2 557.2 600.4 544.8 597.8 533.1 595.7 533.3 588.8Z"/>
<path fill="#6c4692" d="M491.9 437.1 500.2 438.3 508 438.8 508 445.8 508 453 500 452.5 491.6 451.5 491.7 444.2Z"/>
<path fill="#7a50a4" d="M512 438.8 519.8 438.3 528.1 437.1 528.3 444.2 528.4 451.5 520 452.5 512 453 512 445.8Z"/>
<path fill="#845aa8" d="M533.1 436.2 544.8 434.1 557.2 431.6 556.8 439 556 446.6 544.5 448.9 533.3 450.7 533.3 443.4Z"/>
<path fill="#a288c4" d="M562.7 430.1 572.5 427 582.1 423.7 581.2 431.5 579.9 439.7 570.5 442.6 561 445.3 562 437.6Z"/>
<path fill="#a086c2" d="M667.8 405.4 673.6 406 678.9 406.7 676.5 416.8 673.7 427 668.4 426.3 662.6 425.8 665.5 415.5Z"/>
<path fill="#d2bce0" d="M681.3 407 685.9 407.9 689.9 408.8 687.6 418.8 684.8 428.9 680.7 428.1 676.1 427.3 678.9 417.2Z"/>
<path fill="#8056a2" d="M691.8 409.3 695.1 410.2 698.1 411.3 696 421.2 693.4 431.2 690.2 430.3 686.8 429.4 689.5 419.3Z"/>
<path fill="#8458a8" d="M699.4 411.8 701.7 412.8 703.7 413.9 701.8 423.8 699.6 433.6 697.3 432.7 694.8 431.7 697.3 421.7Z"/>
<path fill="#7a509c" d="M704.6 414.4 706.1 415.4 707.3 416.4 705.5 426.3 703.9 435.8 702.4 435 700.6 434.1 702.6 424.3Z"/>
<path fill="#8054a6" d="M707.8 416.9 708.7 417.7 709.3 418.5 707.8 428.3 706.7 437.7 705.7 437 704.6 436.3 706.1 426.7Z"/>
<path fill="#60407e" d="M709.6 418.9 710 419.5 710.3 420 709 429.7 708.2 438.9 707.7 438.5 707.1 438 708.1 428.7ZM705.9 493.2 706.4 493.1 706.7 493.1 706.6 501.4 706.5 509.7 706.3 509.8 705.6 509.8 705.7 501.5Z"/>
<path fill="#744c96" d="M710.4 420.2 710.5 420.5 710.6 420.6 709.4 430.2 708.7 439.4 708.6 439.3 708.4 439.1 709.1 429.9Z"/>
<path fill="#402868" d="M316.1 445.2 317.1 444.5 318.3 443.8 319.1 452.8 319.9 461.7 318.3 462.3 316.9 462.7 316.5 454ZM317.9 493.7 319.8 494 322 494.2 322.2 502.5 322.2 510.7 319.9 510.5 317.9 510.3 318 502ZM314 564.5 315.5 565.3 317.3 566.2 316 575.4 314.7 584.6 313.3 583.6 312.2 582.6 313.1 573.5ZM327.4 654.4 331.6 655.5 336.4 656.4 338.8 664.7 342.8 672.2 337.6 671.6 332.9 671 329.1 663.2ZM374.5 702.8 375.6 703 377 703.1 386 703.9 394.9 704.4 393.7 704.3 392.7 704.2 383.6 703.6ZM444.7 706.9 444.8 706.9 445 706.8 453.4 707.2 461.7 707.4 461.6 707.4 461.5 707.4 453.2 707.2ZM456.8 705.5 458.4 705.2 460.1 705 466.8 705.5 473.5 706.1 472.2 706.2 470.9 706.4 463.8 705.9ZM504.2 707.3 505 707.3 505.7 707.3 507.5 707.8 509.3 708 509.2 708 509.1 708 506.6 707.8ZM516.2 707.3 517 707.3 517.7 707.3 514.5 707.8 511.2 708 511.1 708 511 708 513.6 707.8ZM529.2 707.8 529.3 707.8 529.4 707.8 521.2 707.9 513 708 513 708 513 708 521.1 707.9ZM529.5 707.8 529.5 707.8 529.5 707.8 521.3 707.9 513 708 513 708 513 708 521.2 707.9Z"/>
<path fill="#483060" d="M329.8 439 333 438.2 336.5 437.3 339.1 447.1 341.6 457 337.6 457.6 334 458.3 331.9 448.6ZM554.3 541.2 562.6 541.7 570.7 542.2 572.1 552.7 573.8 563 565.3 561.2 556.6 559.5 555.4 550.4Z"/>
<path fill="#644a92" d="M338.5 436.9 342.6 436.1 347.2 435.3 350.1 445.4 353 455.6 348.2 456.1 343.7 456.7 341.1 446.8ZM530.2 700.7 532.8 701 535.4 701.3 532.1 702.8 528.9 704.1 527.1 703.9 525.2 703.8 527.7 702.3Z"/>
<path fill="#7e66ac" d="M349.6 435 354.8 434.4 360.4 433.8 363.5 444.1 366.6 454.4 360.9 454.9 355.6 455.3 352.6 445.1Z"/>
<path fill="#543680" d="M363.3 433.5 369.6 433 376.2 432.8 379.3 443.2 382.4 453.6 375.9 453.9 369.6 454.2 366.5 443.8ZM660.6 697.2 662.6 696.6 664.3 696 656.1 698.9 647.7 700.9 646.1 701.3 644.2 701.6 652.5 699.9ZM557.1 681.9 563.4 683.8 569.1 685.8 565.1 688.1 561 690.2 555.6 688.7 549.1 687.3 553.1 684.7ZM597.1 696.1 601.6 697.6 605.9 698.9 599.5 699.6 593 700.2 589.3 699.2 585.4 698 591.2 697.1ZM608 699.4 612 700.5 615.7 701.3 608.6 701.9 601.6 702.3 598.3 701.6 594.8 700.7 601.4 700.2Z"/>
<path fill="#52367c" d="M379.6 432.8 386.8 433.3 394.4 434.2 397.3 444.3 400.2 454.5 392.9 453.9 385.8 453.6 382.7 443.2ZM494.4 634.2 501.3 633.1 508.3 632.5 508.3 638.3 508.4 643.8 501.8 644.3 495.3 645.3 494.8 639.9ZM658 676.4 663.8 676.5 669.3 676.1 663.7 682.3 657.7 687.5 652.6 687.2 647.1 686.5 652.7 681.9ZM544.6 667.3 554.3 669.6 562.9 672 559.7 675.5 556.1 678.7 547.7 676.8 539.9 675 542.2 671.3Z"/>
<path fill="#583a80" d="M398.3 434.8 406.4 436.4 414.7 438.4 417.2 447.9 419.7 457.6 411.7 456.1 404 455 401.1 444.8ZM704.7 640.8 705.2 639.5 705.5 638.4 704.9 647.9 702.8 656.7 702.3 657.7 701.7 658.7 703.9 650.1Z"/>
<path fill="#9074b6" d="M441.3 445.9 450.5 448.5 459.8 451.1 461.1 459.1 462.4 467.3 453.6 465.3 444.9 463.2 443 454.5Z"/>
<path fill="#ceb6dc" d="M464.7 452.3 475.8 454.4 486.6 456.2 486.7 463.7 486.8 471.3 476.9 469.9 466.9 468.2 465.8 460.2ZM660.2 542.6 665.3 542.3 670.2 541.9 672.1 553.9 674.4 566.7 669.8 567.5 664.9 568.3 662.3 555.3Z"/>
<path fill="#724a9c" d="M491.5 456.9 499.9 457.9 508 458.3 508 465.6 508 472.9 499.8 472.6 491.4 471.8 491.4 464.3Z"/>
<path fill="#8e74b4" d="M512 458.3 520.1 457.9 528.5 456.9 528.6 464.3 528.6 471.8 520.2 472.6 512 472.9 512 465.6ZM683 541 686.6 540.7 689.9 540.4 691 550.6 692.3 561.8 689.4 562.8 686.1 563.8 684.4 551.9Z"/>
<path fill="#8664ac" d="M533.4 456.2 544.2 454.5 555.3 452.3 554.2 460.2 553.1 468.2 543.1 469.9 533.2 471.3 533.3 463.7Z"/>
<path fill="#4e3864" d="M560.2 451.1 569.5 448.6 578.7 445.9 577 454.5 575.1 463.2 566.4 465.3 557.6 467.3 558.9 459.1Z"/>
<path fill="#805c9e" d="M625.8 434 633.4 433.1 640.7 432.6 637.6 443 634.4 453.6 627.3 453.8 619.9 454.5 622.9 444.2Z"/>
<path fill="#865caa" d="M660.3 433.4 666 434 671.3 434.6 668 444.9 664.9 455.2 659.4 454.7 653.7 454.3 656.9 443.9Z"/>
<path fill="#927ab6" d="M673.7 434.9 678.4 435.7 682.6 436.4 679.7 446.5 676.9 456.5 672.3 456 667.4 455.4 670.5 445.2Z"/>
<path fill="#7a509e" d="M693 439 695.7 439.8 698.2 440.7 696.3 450.2 694.5 459.6 691.6 459 688.4 458.4 690.7 448.7Z"/>
<path fill="#8456ac" d="M699.3 441.1 701.2 442 702.9 442.8 701.6 452 700.3 461.2 698.2 460.6 695.8 460 697.5 450.6ZM611.7 497.2 618.7 497.1 625.6 497.1 624.2 505.6 623.6 513.5 616.8 513.6 609.8 513.6 610.4 505.7ZM657.1 518.9 662.5 518.7 667.5 518.6 668 526.6 669.1 534.7 664.1 534.9 658.9 535 657.7 526.9Z"/>
<path fill="#7a4e9e" d="M703.6 443.1 704.9 443.8 706 444.5 705.1 453.5 704.3 462.4 702.9 462 701.2 461.4 702.4 452.3ZM573.8 497.8 581.7 497.6 589.4 497.5 588.4 505.9 587.9 513.7 580.3 513.7 572.5 513.7 573 506Z"/>
<path fill="#7e52a6" d="M706.4 444.7 707.2 445.2 707.8 445.6 707.2 454.5 706.7 463.3 706 463 704.9 462.6 705.7 453.7Z"/>
<path fill="#8662ac" d="M708 445.8 708.3 446 708.4 446.1 708 454.9 707.6 463.6 707.5 463.5 707 463.4 707.5 454.6Z"/>
<path fill="#7e66b2" d="M321.4 468.2 323.6 467.7 326.1 467.1 327.3 478.2 328.3 488.3 325.4 488.1 322.8 487.9 322.2 478.4ZM328.7 628.3 332.8 629.5 337.3 630.6 336.1 640.3 335.8 649.7 331.2 648.7 327.1 647.5 327.6 637.9Z"/>
<path fill="#4a3076" d="M335.5 465.5 339.3 464.9 343.4 464.4 345.6 477.2 347.4 489.1 343 489 338.9 488.8 337.3 477.7ZM493.5 693.9 496.9 693.5 500.4 693.1 501.2 695.7 502.1 698.1 499.2 698.3 496.4 698.5 494.9 696.3ZM527.4 705 529 705.1 530.5 705.3 526.5 706.2 522.5 706.9 521.6 706.9 520.6 706.8 524 706Z"/>
<path fill="#b6a2ce" d="M345.5 464.2 350.1 463.7 355.1 463.2 357.6 476.3 359.8 489.1 354.6 489.1 349.7 489.1 347.8 477Z"/>
<path fill="#543880" d="M388 461.5 395 461.7 402.3 462.3 404.8 475.4 407 488.9 399.9 488.8 393.1 488.8 390.8 475Z"/>
<path fill="#56387e" d="M406 462.7 413.6 463.6 421.5 464.9 423.7 477.1 425.6 489.5 418.1 489.2 410.7 489 408.5 475.6Z"/>
<path fill="#6a4694" d="M467.8 474.2 477.3 475.7 486.9 476.9 487.1 484.9 487.2 492.9 478.5 492.5 469.9 492.1 468.9 483.1ZM705.8 585.7 706 585.3 706.1 585.2 706.1 594 706.2 603 706.1 603.2 706 603.5 705.9 594.5Z"/>
<path fill="#764e9e" d="M512 478.4 520.2 478.1 528.6 477.4 528.5 485.2 528.5 493 520.2 493.2 512 493.3 512 485.8ZM532.7 498.7 541.2 498.5 549.6 498.4 549 506.2 548.8 513.8 540.7 513.8 532.5 513.8 532.6 506.3ZM698.1 539.6 700.2 539.3 701.9 539.1 702.2 548 702.6 557.3 701.1 558 699.3 558.9 698.6 548.9Z"/>
<path fill="#9276b8" d="M556.6 473.4 565.3 471.7 573.8 469.9 572.1 480.3 570.7 490.9 562.6 491.4 554.3 491.9 555.4 482.6ZM532.5 519.4 540.7 519.4 548.8 519.4 549 527 549.6 534.8 541.2 534.6 532.7 534.5 532.6 526.9Z"/>
<path fill="#987cbe" d="M578 469 586.4 467.2 594.6 465.6 592.4 477.5 590.5 489.7 582.7 490.2 574.7 490.6 576.3 479.7Z"/>
<path fill="#ccb6dc" d="M598.6 464.9 606.4 463.6 614.1 462.6 611.5 475.6 609.4 489 602 489.2 594.4 489.5 596.3 477.1Z"/>
<path fill="#7a529c" d="M617.8 462.2 625.1 461.7 632.1 461.5 629.3 475 627 488.8 620.1 488.8 613 488.9 615.2 475.4Z"/>
<path fill="#cab4d8" d="M635.5 461.5 642.1 461.7 648.4 462 645.5 475.4 643.1 489 636.8 488.9 630.3 488.8 632.7 475Z"/>
<path fill="#c8b2d8" d="M651.4 462.2 657.2 462.5 662.7 462.9 659.9 476.1 657.7 489.1 652 489.1 646.2 489 648.6 475.5ZM574.7 542.4 582.7 542.9 590.5 543.3 592.4 555.4 594.5 567.2 586.4 565.6 578 563.9 576.3 553.3ZM613 544.1 620 544.1 626.9 544 629.2 557.7 632 571 625 570.9 617.7 570.5 615.2 557.4ZM661.9 605.3 667.5 604.4 672.6 603.5 675.2 613.3 677.4 623 672.4 624.1 666.9 625 664.6 615.2Z"/>
<path fill="#7e52a4" d="M665.3 463.1 670.3 463.6 674.9 464 672.5 476.9 670.4 489.1 665.5 489.1 660.4 489.1 662.6 476.3ZM686.9 465.6 690.2 466.2 693.2 466.7 691.7 478.1 690.4 488.4 687 488.6 683.3 488.7 684.9 477.7ZM628.9 497.1 635.4 497.1 641.7 497 640.4 505.4 639.7 513.3 633.4 513.4 626.9 513.5 627.6 505.6ZM642.8 519.2 648.7 519.1 654.4 519 655 526.9 656.2 535.1 650.6 535.3 644.7 535.4 643.4 527.1Z"/>
<path fill="#8254aa" d="M677.1 464.3 681.3 464.8 685.1 465.3 683.1 477.6 681.4 488.8 677.2 488.9 672.8 489 674.8 477.1ZM591.6 519.5 599 519.5 606.3 519.5 606.8 527.3 608.1 535.8 600.7 535.8 593.2 535.7 592.2 527.3Z"/>
<path fill="#8052a6" d="M694.6 467 697.2 467.5 699.4 468 698.3 478.3 697.4 487.9 694.8 488.1 691.9 488.3 693.2 478.2Z"/>
<path fill="#704a94" d="M700.4 468.2 702.3 468.7 703.8 469 703.1 478.4 702.5 487.4 700.7 487.6 698.6 487.8 699.4 478.4Z"/>
<path fill="#7c50a2" d="M704.4 469.2 705.6 469.5 706.4 469.7 706 478.5 705.6 487 704.6 487.2 703.3 487.3 703.8 478.5ZM659 496.7 664.3 496.6 669.2 496.4 668.1 504.6 667.5 512.6 662.5 512.8 657.2 513 657.8 505ZM626.9 519.4 633.4 519.3 639.7 519.2 640.3 527.1 641.6 535.5 635.4 535.6 628.9 535.7 627.6 527.3Z"/>
<path fill="#724a94" d="M706.7 469.8 707.2 469.9 707.4 470 707.1 478.5 706.8 486.9 706.6 486.9 706 487 706.4 478.5ZM644.8 497 650.7 496.9 656.3 496.8 655 505 654.4 513 648.7 513.2 642.8 513.3 643.4 505.3Z"/>
<path fill="#4e327a" d="M350.8 496.4 355.8 496.6 361 496.7 362.2 505 362.8 513 357.4 512.8 352.4 512.6 351.9 504.6ZM457.1 672 465.7 669.6 475.3 667.4 477.8 671.3 480.1 675.1 472.2 676.8 463.9 678.8 460.3 675.5ZM642.1 701.9 643.4 701.6 644.5 701.4 635.7 702.7 627 703.7 626 703.8 624.8 704 633.5 703.1ZM511.1 684.1 515.4 684.2 519.7 684.5 519.1 687.8 518.4 690.8 514.7 690.6 510.9 690.6 511 687.4ZM521.9 684.8 526.1 685.4 530.6 686.1 529.1 689.1 527.6 691.9 523.9 691.4 520.2 691 521.1 688ZM560.3 692.3 564.7 693.7 569 694.9 564.1 696.3 559.3 697.7 555.5 696.8 551 695.9 555.9 694.2ZM595.2 705.8 596.1 705.8 596.9 705.8 588.4 706.2 580 706.5 579.3 706.4 578.6 706.4 586.8 706.1Z"/>
<path fill="#c2acd6" d="M394.5 497.1 401.3 497.1 408.3 497.2 409.6 505.7 410.2 513.6 403.2 513.6 396.4 513.5 395.8 505.6ZM623.2 667.6 630.8 670.3 638.1 672.6 633.5 677.4 628.6 681.5 621.9 679.1 614.9 676.3 619.2 672.2Z"/>
<path fill="#503674" d="M411.9 497.2 419.3 497.3 426.8 497.4 427.8 505.9 428.4 513.7 421 513.7 413.7 513.6 413.1 505.8Z"/>
<path fill="#7a5ca6" d="M450.1 497.9 458.2 498.1 466.3 498.3 466.9 506.2 467.2 513.8 459.2 513.8 451.4 513.7 451 506Z"/>
<path fill="#6e4a9c" d="M470.4 498.4 478.8 498.5 487.3 498.7 487.4 506.3 487.5 513.8 479.3 513.8 471.2 513.8 471 506.2Z"/>
<path fill="#764ea2" d="M512.1 498.8 520.2 498.8 528.5 498.7 528.5 506.3 528.4 513.8 520.3 513.8 512.1 513.8 512.1 506.3ZM694.7 568.1 697 567 699 566 700 575 701 583.9 699.5 585.2 697.6 586.5 696.1 577.3Z"/>
<path fill="#7c50a4" d="M553.7 498.3 561.8 498.1 569.9 497.9 569 506 568.6 513.7 560.8 513.8 552.8 513.8 553.1 506.2ZM672.5 541.8 676.9 541.5 681 541.2 682.6 552.2 684.4 564.3 680.6 565.3 676.6 566.2 674.4 553.6Z"/>
<path fill="#c8b0d6" d="M593.2 497.4 600.8 497.3 608.1 497.2 606.9 505.8 606.3 513.6 599 513.7 591.6 513.7 592.2 505.9ZM646 543.3 651.9 543 657.5 542.7 659.7 555.6 662.3 568.6 656.9 569.3 651.1 569.9 648.4 556.7Z"/>
<path fill="#704892" d="M671.6 496.3 676.1 496 680.4 495.8 679.4 503.9 679 512.1 674.6 512.3 670 512.5 670.5 504.4ZM703 493.6 704.4 493.4 705.5 493.3 705.3 501.6 705.2 509.9 704.1 510 702.6 510.2 702.8 501.9Z"/>
<path fill="#7a50a0" d="M682.4 495.6 686.1 495.4 689.6 495.1 688.9 503.3 688.5 511.4 684.9 511.7 681 511.9 681.5 503.8Z"/>
<path fill="#744c98" d="M691.2 494.9 694.2 494.6 696.9 494.3 696.4 502.6 696.2 510.8 693.4 511.1 690.2 511.3 690.6 503.1Z"/>
<path fill="#764c9a" d="M698.1 494.2 700.3 494 702.2 493.7 701.9 502 701.7 510.3 699.8 510.5 697.4 510.7 697.7 502.5Z"/>
<path fill="#442e5c" d="M323.4 516.9 326.2 517.1 329.4 517.4 328.9 525.5 328.1 533.8 325 533.6 322.3 533.4 323 525.1Z"/>
<path fill="#7a62aa" d="M340.8 518.1 345.2 518.3 349.9 518.5 349.2 526.5 348 534.7 343.4 534.5 339.1 534.3 340.2 526.2Z"/>
<path fill="#4c3078" d="M352.3 518.6 357.4 518.7 362.7 518.9 362.1 526.9 360.7 535.1 355.4 534.9 350.4 534.8 351.7 526.6ZM442.7 648.1 451.7 644.6 462 641.3 464.2 646.6 466.5 651.7 456 654.7 447.6 657.9 445.1 653.2ZM395.6 702.9 398.9 702.4 402.4 701.8 409.7 702.3 416.9 702.6 413.9 703.2 411 703.7 403.4 703.4ZM450.9 685.8 456.6 683.9 462.9 682 466.9 684.8 470.9 687.4 464.4 688.8 458.9 690.2 454.9 688.1ZM416.7 703.8 419.3 703.4 422.2 702.9 429.3 703.2 436.3 703.5 433.9 703.9 431.6 704.3 424.2 704.1ZM431.8 700.6 435.3 699.6 439 698.6 444.8 699.4 450.6 700.3 447.4 701 444.5 701.7 438.1 701.2ZM423.2 705.8 423.9 705.8 424.8 705.7 433.2 706.1 441.4 706.4 440.7 706.5 440 706.5 431.6 706.2ZM447.9 706.6 448.7 706.5 449.7 706.4 457.5 706.7 465.3 707 464.6 707.1 464 707.2 455.9 706.9ZM517.3 699.7 519.9 699.8 522.5 700 521 701.8 519.4 703.5 517.4 703.4 515.5 703.3 516.4 701.6ZM549.5 703.3 551.9 703.6 554.2 704 547.9 704.7 542 705.4 540.4 705.2 538.7 705.1 543.9 704.2ZM570.3 706.3 571.3 706.5 572.1 706.5 564 706.8 556 707.1 555.4 707 554.6 706.9 562.4 706.6ZM476 706.7 477.1 706.6 478.3 706.5 484.6 707 490.8 707.4 490.1 707.5 489.4 707.5 482.8 707.2ZM494.3 707.7 494.8 707.7 495.4 707.7 501.5 707.9 507.7 708 507.6 708 507.6 708 500.9 707.9Z"/>
<path fill="#5c3c8c" d="M396.4 519.4 403.2 519.4 410.2 519.5 409.6 527.3 408.3 535.8 401.2 535.8 394.4 535.7 395.7 527.3ZM691 670.7 693.4 669.6 695.5 668.4 690.5 675.7 684.7 682 682.3 682.9 679.6 683.8 685.6 677.7ZM688.2 682.3 689 681.8 689.5 681.5 683 686.8 675.6 691.2 674.9 691.5 674.1 691.9 681.6 687.6Z"/>
<path fill="#c6aed8" d="M432.1 519.5 439.7 519.5 447.4 519.5 447 527.2 446.2 535.3 438.3 535.5 430.6 535.6 431.6 527.2Z"/>
<path fill="#7c5ea8" d="M471.2 519.4 479.3 519.4 487.5 519.4 487.4 526.9 487.3 534.5 478.8 534.6 470.4 534.8 471 527Z"/>
<path fill="#cab2d8" d="M609.8 519.5 616.8 519.4 623.6 519.4 624.2 527.3 625.5 535.7 618.7 535.8 611.7 535.8 610.4 527.3Z"/>
<path fill="#8054a8" d="M669.9 518.5 674.6 518.3 678.9 518 679.3 526.1 680.1 534.2 675.9 534.4 671.4 534.6 670.4 526.5ZM690.2 517.3 693.3 517.1 696.1 516.9 696.2 525.1 696.5 533.3 693.9 533.5 690.9 533.7 690.4 525.5ZM702.5 516.3 704 516.1 705.1 516 705.1 524.3 705 532.6 704 532.7 702.6 532.8 702.5 524.5Z"/>
<path fill="#764c9c" d="M681 517.9 684.9 517.7 688.5 517.5 688.7 525.6 689.3 533.8 685.9 534 682.1 534.1 681.3 526Z"/>
<path fill="#784e9e" d="M697.4 516.8 699.7 516.6 701.7 516.4 701.7 524.6 701.8 532.9 699.9 533 697.8 533.2 697.5 525Z"/>
<path fill="#6e4690" d="M705.6 516 706.2 515.9 706.4 515.9 706.3 524.2 706.2 532.5 706 532.5 705.4 532.5 705.5 524.3Z"/>
<path fill="#7860aa" d="M321.6 539.9 324.3 540.2 327.2 540.4 325.9 550.6 324.3 561.7 321.6 560.8 319.3 559.9 320.5 549.5ZM354.3 657.9 361.3 657.5 368.7 656.6 371.2 663.7 374.7 670 367.6 671.5 360.8 672.4 357 665.5Z"/>
<path fill="#462e70" d="M376.7 543.5 383 543.7 389.6 543.9 387.2 557.6 384.4 571 377.8 570.7 371.4 570.3 374.3 557Z"/>
<path fill="#684e96" d="M393 544 399.9 544.1 407 544.1 404.8 557.5 402.1 570.5 394.8 571 387.8 571.1 390.6 557.7Z"/>
<path fill="#4c346e" d="M410.6 544 418 543.8 425.6 543.5 423.7 555.9 421.4 568 413.5 569.2 405.9 570.2 408.4 557.3Z"/>
<path fill="#5a3c84" d="M449.3 542.2 457.4 541.7 465.7 541.2 464.6 550.4 463.4 559.5 454.7 561.2 446.2 563 447.9 552.7Z"/>
<path fill="#947abc" d="M512 539.8 520.2 539.9 528.5 540.1 528.5 547.8 528.6 555.5 520.2 554.8 512 554.5 512 547.2Z"/>
<path fill="#9074b4" d="M532.8 540.2 541.5 540.6 550.1 541 551.1 549.9 552.2 558.7 542.7 557.2 533.1 556 532.9 548.2Z"/>
<path fill="#6a448e" d="M594.4 543.5 601.9 543.8 609.3 544 611.5 557.2 614 570.1 606.4 569.2 598.5 567.9 596.3 555.9Z"/>
<path fill="#7c52a8" d="M630.3 543.9 636.8 543.7 643 543.4 645.4 556.9 648.1 570.1 641.9 570.6 635.4 571 632.6 557.6Z"/>
<path fill="#7e52aa" d="M691.5 540.2 694.4 540 696.9 539.7 697.6 549.1 698.4 559.3 696.2 560.3 693.7 561.3 692.5 550.2Z"/>
<path fill="#7c50a6" d="M702.7 539 704 538.9 705 538.8 705 547.2 705.1 555.9 704.3 556.3 703.2 556.9 702.9 547.8Z"/>
<path fill="#8262aa" d="M705.4 538.7 705.9 538.6 706.2 538.6 706.1 547 706 555.4 705.9 555.5 705.4 555.7 705.4 547.2Z"/>
<path fill="#422a6c" d="M310.5 562.5 310.7 562.6 311.2 562.9 310.6 571.7 310 580.7 309.7 580.4 309.5 580.2 310.1 571.3ZM382.4 703.6 384.6 703.6 387.1 703.6 395.4 704.1 403.6 704.4 401.5 704.5 399.6 704.6 391.1 704.2ZM453.2 706 454.5 705.8 456 705.6 463.1 706 470.3 706.5 469.1 706.6 468.1 706.7 460.6 706.3Z"/>
<path fill="#7c64b0" d="M332.4 571.9 336.2 572.9 340.3 573.9 337.6 583.8 334.7 593.7 331 592.5 327.6 591.3 330 581.6Z"/>
<path fill="#7e64b0" d="M354.8 576.5 360.3 577.2 366.1 577.8 362.8 588.1 359.6 598.3 353.8 597.5 348.4 596.7 351.6 586.6Z"/>
<path fill="#482c72" d="M369.1 578 375.5 578.5 382.1 578.9 378.9 589.3 375.7 599.5 369 599.2 362.6 598.6 365.9 588.4ZM440.9 698 444.8 696.9 448.9 695.6 453.9 696.9 458.9 698.2 455.5 699 452.2 699.9 446.6 698.9ZM451 695 455.2 693.7 459.7 692.4 464.1 694.2 469 696 464.5 696.9 460.7 697.8 455.8 696.4ZM467.7 707.6 467.8 707.6 467.9 707.6 476.2 707.8 484.4 707.9 484.4 707.9 484.3 707.9 476 707.8ZM473.5 707 474.5 706.9 475.5 706.8 482.4 707.2 489.1 707.6 488.5 707.6 487.9 707.6 480.8 707.3Z"/>
<path fill="#563882" d="M423.7 574.4 432 572.6 440.5 570.6 438.6 579.4 436.7 588 427.7 590.6 418.9 593 421.3 583.8ZM646.6 699.1 649.9 699.1 653 698.8 645.2 700.8 637.2 702.2 634.4 702.2 631.4 702.1 639.1 700.9Z"/>
<path fill="#8e74b6" d="M491.4 561 499.8 560.2 508 559.9 508 567.1 508 574.2 499.9 574.6 491.5 575.6 491.4 568.4Z"/>
<path fill="#66428c" d="M557.6 565.5 566.4 567.5 575.1 569.6 577 578.2 578.7 586.6 569.5 584 560.2 581.4 558.9 573.6Z"/>
<path fill="#c8b2d6" d="M579.4 570.6 587.9 572.6 596.3 574.4 598.7 583.8 601 593 592.2 590.5 583.3 588 581.4 579.4Z"/>
<path fill="#764ea4" d="M619.8 578.1 627.2 578.7 634.2 578.8 637.3 589.1 640.4 599.3 633.2 599 625.6 598.1 622.7 588.2Z"/>
<path fill="#744c9e" d="M703.5 563.4 704.4 562.7 705.2 562.2 705.3 570.8 705.5 579.5 705 580.1 704.3 580.8 703.9 572.1Z"/>
<path fill="#7a50a6" d="M705.5 562 705.8 561.7 706 561.6 706 570.1 706 578.7 705.9 578.9 705.7 579.2 705.5 570.6Z"/>
<path fill="#b6a2d0" d="M319.2 595.2 321.6 596.5 324.3 597.8 322.2 607.5 320.4 617.1 318 615.7 315.9 614.3 317.4 604.7Z"/>
<path fill="#b8a2d2" d="M334.7 601.5 339 602.6 343.7 603.6 341 613.5 338.7 623.4 334.1 622.3 330 621.1 332.2 611.3ZM349.4 677.5 355.1 677.6 361.2 677.3 366.6 682.8 372.3 687.2 366.6 688.2 361.3 688.7 355.1 683.6Z"/>
<path fill="#c2acd8" d="M440.1 592.7 449.5 589.8 459 587.1 458 594.6 457.3 601.9 447.5 605 437.8 608.3 438.8 600.7Z"/>
<path fill="#5c3e8a" d="M464 585.8 475.5 583.5 486.7 581.7 486.7 588.8 486.9 595.7 475.2 597.8 462.8 600.4 463.2 593.2Z"/>
<path fill="#c2acd4" d="M491.6 580.9 500 579.9 508 579.4 508 586.4 508 593.2 500.2 593.7 491.9 594.9 491.7 588Z"/>
<path fill="#5e3e86" d="M512 579.4 520 579.9 528.4 580.9 528.3 588 528.1 594.9 519.8 593.7 512 593.2 512 586.4ZM704.3 615 704.9 613.8 705.4 612.6 705.6 621.9 705.7 631.4 705.4 632.5 704.9 633.8 704.7 624.3Z"/>
<path fill="#442a6e" d="M307.9 612.6 308 612.8 308.2 613.1 307.9 622.8 307.8 632.6 307.7 632.3 307.6 632.2 307.7 622.3ZM319.3 651.3 322.1 652.6 325.5 653.8 327.1 662.7 330.7 670.6 326.7 669.9 323.2 669 320.3 660.5ZM461 704.8 462.8 704.5 464.8 704.2 471.2 704.9 477.2 705.7 475.7 705.8 474.2 706 467.6 705.4ZM465.8 704.1 468.1 703.7 470.5 703.4 476 704.3 481.2 705.2 479.6 705.4 478 705.6 472.1 704.8ZM490.6 708 490.7 708 490.8 708 498.9 708 507 708 507 708 507 708 498.8 708Z"/>
<path fill="#b6a0ce" d="M315 621.4 317 622.9 319.3 624.3 318.3 633.9 317.9 643.5 315.6 642.2 313.8 640.8 314.1 631.1Z"/>
<path fill="#7860a8" d="M353.9 633.3 360.4 633.8 367.4 633.6 366.9 642.6 367.5 650.9 360.1 651.6 353.1 651.8 352.9 642.9ZM366 691.8 371.2 691 376.7 689.9 382.9 692.8 389.2 695.1 384.3 696.3 379.5 697.3 372.6 694.9Z"/>
<path fill="#7c64ac" d="M413.8 622.5 423.1 619.1 432.6 615.6 432.4 622.7 432.8 629.5 423.3 633.3 414.1 637 413.6 630Z"/>
<path fill="#5c3c86" d="M511.9 598.2 519.7 598.7 527.9 599.9 527.6 606.6 527.2 613.1 519.4 611.8 511.9 611.3 511.9 604.8ZM562.2 625.2 572.2 628.7 581.8 632.3 580.6 638.4 578.8 644.1 569.7 640.5 559.4 637.2 561 631.3Z"/>
<path fill="#8c72b4" d="M532.8 600.8 544.6 602.9 557.4 605.6 557.2 612.4 556.7 619 543.6 616.2 532 614 532.5 607.5Z"/>
<path fill="#9276ba" d="M563 607.1 572.9 610.3 582.6 613.8 582.8 620.9 582.4 627.6 572.7 623.9 562.7 620.5 563.1 614Z"/>
<path fill="#c4aed6" d="M587.4 615.5 596.9 619 606.2 622.4 606.4 629.9 605.9 636.9 596.6 633.2 587.2 629.5 587.6 622.7Z"/>
<path fill="#c8b0da" d="M610.7 623.9 619.6 626.8 628.3 629.2 628.6 637.3 628 644.9 619.3 642 610.4 638.7 610.9 631.6Z"/>
<path fill="#8a70b2" d="M690.7 626.2 693.8 624.8 696.4 623.2 697.3 632.7 697.6 642 695.1 643.5 692 644.9 691.8 635.7Z"/>
<path fill="#644492" d="M705.6 612.1 705.9 611.3 706 610.6 706.1 619.8 706 629.3 706 630 705.8 630.9 705.8 621.4Z"/>
<path fill="#6e4aa0" d="M706.1 610.3 706.2 609.9 706.2 609.7 706.2 619 706.1 628.5 706.1 628.6 706.1 629 706.1 619.6Z"/>
<path fill="#7e66ae" d="M438.2 632.3 447.8 628.7 457.8 625.2 459 631.3 460.6 637.2 450.3 640.5 441.2 644.1 439.4 638.4Z"/>
<path fill="#8c72b8" d="M511.9 616 519.3 616.5 526.9 617.8 526.5 623.9 526 629.9 518.9 628.7 511.8 628.2 511.8 622.2Z"/>
<path fill="#644292" d="M586.6 634.2 595.9 638 605.1 641.8 603.4 647.9 601.1 653.5 592.3 649.8 583.4 646 585.2 640.3Z"/>
<path fill="#523874" d="M609.6 643.6 618.4 647 627 650 624.9 656.5 622 662.2 613.8 658.9 605.4 655.4 607.8 649.7Z"/>
<path fill="#54387e" d="M667.7 656.8 673.6 656 678.9 655.1 676.6 663.3 672.9 671 667.4 671.6 661.5 671.7 665.2 664.6Z"/>
<path fill="#563a80" d="M691.4 651.5 694.5 650.1 697.2 648.7 695.6 657.4 692.8 665.7 689.8 666.9 686.3 668 689.7 660.1Z"/>
<path fill="#5e3e8a" d="M705.6 637.9 705.8 637 705.9 636.4 705.3 646 703.5 655 703.3 655.6 703 656.3 705 647.4Z"/>
<path fill="#7862aa" d="M364.4 676.9 371 675.8 377.9 674.1 382.8 678.9 387.9 682.9 381.4 685 375.3 686.6 369.7 682.3Z"/>
<path fill="#50347a" d="M468.1 639.8 480.3 637.2 490.3 635.1 491.1 640.7 491.8 646.1 483.1 648 472.3 650.4 470.1 645.2ZM546.3 689.2 552.3 690.4 558 691.7 553.3 693.6 548.7 695.5 544.1 694.7 539.7 693.9 542.9 691.6Z"/>
<path fill="#603e8e" d="M511.7 632.5 518.7 633.1 525.6 634.2 525.1 639.9 524.7 645.3 518.2 644.3 511.6 643.8 511.7 638.3Z"/>
<path fill="#624090" d="M529.7 635.1 539.7 637.2 551.9 639.8 549.8 645.2 547.7 650.4 536.9 648 528.2 646.1 528.9 640.7Z"/>
<path fill="#72569e" d="M558 641.3 568.3 644.6 577.3 648.1 574.9 653.2 572.4 657.9 564 654.7 553.5 651.7 555.8 646.6Z"/>
<path fill="#866cb2" d="M581.7 649.9 590.4 653.7 599 657.4 595.8 662.2 592.5 666.6 584.6 663.1 576.5 659.6 579.2 654.9Z"/>
<path fill="#503672" d="M603.1 659.2 611.4 662.8 619.4 666 615.4 670.7 611.3 674.8 603.9 671.6 596.3 668.3 599.8 664Z"/>
<path fill="#c0aad6" d="M641.6 673.6 648.4 675.1 654.9 676.1 649.7 681.5 644.2 685.9 638.2 684.4 631.9 682.6 636.9 678.5ZM571.8 686.8 577.2 688.8 582.5 690.8 577.6 692.4 572.7 693.9 568.1 692.4 563.4 690.9 567.6 688.9Z"/>
<path fill="#5a3a86" d="M671.8 675.8 676.6 674.9 680.9 674 675.2 680.6 669.1 686.4 664.8 687.1 660.2 687.5 666.2 682.1ZM682.8 673.5 686.4 672.4 689.6 671.3 684.2 678.2 678 684.3 674.7 685.2 671 686 677.2 680.1ZM593.6 671.2 601 674.4 608.1 677.5 603.7 680.7 599.1 683.5 592.7 680.8 586 677.9 589.9 674.7Z"/>
<path fill="#4e3472" d="M696.3 667.8 697.8 666.6 699 665.5 694.7 673.2 689.3 679.9 687.7 680.7 685.8 681.6 691.5 675.2Z"/>
<path fill="#5e3e8e" d="M699.5 665 700.3 663.9 700.9 663 697.1 671 692.2 678.1 691.2 678.7 690 679.5 695.3 672.7Z"/>
<path fill="#7a62ac" d="M411.9 677.6 419 674.4 426.4 671.2 430.1 674.7 434 677.9 427.3 680.8 420.9 683.5 416.3 680.8Z"/>
<path fill="#52347a" d="M511.6 647.8 518 648.2 524.3 649.2 523.8 654.3 523.3 659.2 517.4 658.3 511.5 658 511.5 653Z"/>
<path fill="#bea8d4" d="M527.7 649.9 535.9 651.7 546.1 654 543.9 658.7 541.7 663.2 533.2 661.3 526.3 659.8 527 655ZM628 685.2 634.2 687.1 640 688.6 634.1 691.6 628 694 622.7 692.5 617.1 690.6 622.7 688.2Z"/>
<path fill="#5a3a88" d="M611.6 679 618.4 681.7 624.9 684.1 619.7 687.1 614.3 689.6 608.4 687.3 602.3 684.9 607 682.1ZM666.2 689.9 669.8 689.1 673.1 688.2 666.1 692.9 658.7 696.7 655.5 697.2 652.1 697.4 659.3 694.2Z"/>
<path fill="#503478" d="M642.8 689.2 648.1 690.2 653.1 690.7 646.7 694 640 696.6 635.4 695.8 630.5 694.7 636.7 692.3Z"/>
<path fill="#4c3072" d="M655.5 690.8 660 690.7 664.2 690.2 657.4 694.4 650.2 697.4 646.4 697.3 642.2 696.9 649 694.3Z"/>
<path fill="#4c326e" d="M674.7 687.8 677.4 687 679.9 686.2 672.8 691 665.3 695 662.8 695.7 660.1 696.4 667.6 692.5ZM625.8 696.1 630.5 697.2 634.9 698.1 628 699.6 620.9 700.7 617 699.8 612.8 698.8 619.3 697.6ZM670 693.8 670.3 693.7 670.5 693.6 662.2 696.7 653.6 699.1 653.4 699.2 653.1 699.3 661.7 696.9Z"/>
<path fill="#52367e" d="M681 685.8 683 685 684.7 684.2 677.8 689.2 670.2 693.4 668.4 694 666.4 694.7 674 690.6ZM685.4 683.8 686.7 683.2 687.8 682.6 681.1 687.8 673.6 692.1 672.4 692.6 671 693.1 678.5 688.9ZM617.5 701.6 620.9 702.2 624.2 702.6 616.6 703.2 609 703.7 606.1 703.2 603.1 702.7 610.3 702.3Z"/>
<path fill="#7c64aa" d="M479.8 666.4 487.7 664.6 494.2 663.2 494.9 667.6 495.6 671.8 490.1 672.9 483.7 674.3 481.8 670.4Z"/>
<path fill="#826ab2" d="M511.4 661.5 517.2 661.8 522.9 662.6 522.4 667.1 521.8 671.4 516.6 670.8 511.3 670.5 511.4 666.1Z"/>
<path fill="#4e3274" d="M566.3 673.3 573.2 676 579.8 678.7 575.9 681.5 572 684 566.1 681.9 559.9 679.7 563.2 676.6Z"/>
<path fill="#6c5098" d="M583.1 680.1 589.5 682.8 595.7 685.4 590.9 687.6 586.1 689.5 580.6 687.3 574.9 685.1 579 682.7Z"/>
<path fill="#52347c" d="M613 692.1 618.3 693.9 623.4 695.4 617 697 610.7 698.2 606.2 696.8 601.4 695.2 607.3 693.8ZM645 701.2 645.8 701 646.4 700.8 637.6 702.3 628.7 703.4 628.1 703.5 627.4 703.6 636.2 702.6Z"/>
<path fill="#583886" d="M668.2 694.6 669.1 694.2 669.7 693.9 661.4 697 652.9 699.4 652.2 699.6 651.4 699.9 659.9 697.5Z"/>
<path fill="#402864" d="M388.4 703.6 391.1 703.4 394.1 703.1 401.9 703.6 409.7 703.9 407.1 704.2 404.8 704.4 396.6 704.1Z"/>
<path fill="#4c307a" d="M466.7 681 474.5 679.3 481.7 677.7 483.8 681.1 485.7 684.4 480.1 685.5 474.1 686.7 470.5 684ZM521.6 707.4 522.3 707.5 522.9 707.5 517.5 707.8 512 708 511.9 708 511.8 708 516.7 707.8Z"/>
<path fill="#b8a2d0" d="M485 677 490.9 675.8 496.2 674.8 496.9 678.7 497.6 682.3 493.1 683 488.3 683.9 486.7 680.5Z"/>
<path fill="#462c6c" d="M498.6 674.4 503.7 673.9 508.7 673.6 508.8 677.7 508.9 681.4 504.3 681.6 499.8 682 499.2 678.3ZM528.3 694 531.9 694.5 535.6 695.1 533.1 697.2 530.7 699.2 527.8 698.9 525 698.6 526.6 696.4Z"/>
<path fill="#4c326c" d="M646.6 700.7 647 700.6 647.1 700.6 638.2 702.1 629.3 703.3 629.2 703.3 628.9 703.3 637.8 702.2Z"/>
<path fill="#684e94" d="M571.1 695.6 575.2 696.8 579.1 698 573.4 698.9 567.8 699.8 564.5 699 561.1 698.1 566.1 696.9Z"/>
<path fill="#4a326c" d="M604.6 704.1 607 704.3 609.3 704.5 601.3 704.8 593.5 705 591.6 704.8 589.5 704.5 597 704.3ZM614.9 704.7 616.5 704.6 617.8 704.6 609.3 705.1 600.9 705.5 599.7 705.5 598.4 705.4 606.6 705.1ZM620.9 704.2 621.6 704.1 622.1 704.1 613.3 704.8 604.6 705.5 604.2 705.5 603.6 705.5 612.2 704.9Z"/>
<path fill="#52347e" d="M610.3 704.6 612.3 704.7 614.1 704.7 605.8 705.1 597.6 705.4 596.1 705.3 594.4 705.1 602.3 704.9Z"/>
<path fill="#50327c" d="M519.6 693.1 523.1 693.4 526.5 693.8 525.1 696.2 523.6 698.5 520.8 698.2 517.9 698.1 518.8 695.7ZM567.4 706 568.7 706.1 569.8 706.3 562 706.6 554.2 706.9 553.4 706.8 552.4 706.7 559.9 706.3Z"/>
<path fill="#462e6e" d="M557.4 699 560.6 699.8 563.7 700.5 558.2 701.4 552.5 702.4 549.7 701.9 546.8 701.5 552 700.3Z"/>
<path fill="#4a306a" d="M565.2 700.8 568.1 701.5 570.9 702.1 564.7 702.8 558.6 703.4 556.4 703 553.9 702.6 559.6 701.7Z"/>
<path fill="#664c94" d="M588.6 705.3 590.2 705.5 591.6 705.6 583.6 705.8 575.6 706.1 574.4 705.9 573.1 705.8 580.8 705.5Z"/>
<path fill="#4a2e72" d="M597.2 705.8 597.8 705.8 598.2 705.8 589.6 706.2 581.1 706.6 580.7 706.6 580.3 706.5 588.7 706.2Z"/>
<path fill="#4e307a" d="M510.7 699.5 513.3 699.5 515.9 699.6 515.2 701.6 514.5 703.3 512.5 703.3 510.5 703.3 510.6 701.5Z"/>
<path fill="#48306a" d="M543.2 702.4 545.8 702.7 548.3 703.1 542.9 704.1 537.9 705 536.2 704.8 534.4 704.6 538.7 703.5Z"/>
<path fill="#50347e" d="M559.9 704.9 561.6 705.1 563.2 705.4 556.2 705.8 549.1 706.3 547.8 706.1 546.5 705.9 553.2 705.4Z"/>
<path fill="#442c6a" d="M546.9 706.9 547.7 707 548.5 707.1 540.9 707.3 533.3 707.6 532.8 707.6 532.3 707.5 539.5 707.2Z"/>
<ellipse cx="510" cy="318" rx="34" ry="16" fill="url(#pole)"/>
</g>
<defs><radialGradient id="sp"><stop offset="0" stop-color="#fff"/><stop offset="0.45" stop-color="#fff" stop-opacity="0.9"/><stop offset="1" stop-color="#fff" stop-opacity="0"/></radialGradient></defs>
<g>
<path d="M677.5 334Q661 352 648.7 365Q615 392 580.5 417.700" fill="none" stroke="#fff" stroke-width="1.100" stroke-opacity="0.9"/>
<path d="M649.9 366.6L672 340L647.5 364.4ZM647.7 364.2L606 399L649.7 366.8ZM648.4 363.9L603.7 374.8L649 367.1ZM649 367.1L683 360L648.4 363.9ZM650.1 364.8L638.9 344.6L647.3 366.2ZM647.1 365.1L642.4 393.5L650.3 365.9ZM647.5 366.6L681 401.5L649.9 364.4ZM649.2 364L622 357.5L648.2 367Z" fill="#fff" fill-opacity="0.95"/><circle cx="648.7" cy="365.5" r="10" fill="url(#sp)"/>
<ellipse cx="647.500" cy="365" rx="9" ry="4.500" fill="#fff" transform="rotate(-8 647.500 365)"/>
<path d="M388 351Q368 356 361 368Q354 377 353.500 385" fill="none" stroke="#f0e6f4" stroke-width="0.900" stroke-opacity="0.9"/>
<path d="M366.5 362.2L344.8 340.8L365.1 363.4ZM365.2 363.4L395.4 393.5L366.4 362.2ZM366 361.9L351.5 360L365.6 363.7ZM365.6 363.7L383 367.4L366 361.9ZM366.7 362.7L364.7 348L364.9 362.9ZM364.9 362.9L367.8 375L366.7 362.7ZM366.4 363.4L377 352L365.2 362.2ZM365.1 362.2L356 374L366.5 363.4Z" fill="#fff" fill-opacity="0.95"/><circle cx="365.8" cy="362.8" r="4.5" fill="url(#sp)"/>
<path d="M481.6 354.2L465 339.4L480.4 355.4ZM481.3 355.5L498.3 346.5L480.7 354.1ZM480.7 354L461 361.8L481.3 355.6ZM481.2 354L468 352L480.8 355.6ZM481.8 354.8L481.6 345L480.2 354.8ZM480.4 355.3L494.4 370L481.6 354.3Z" fill="#fff" fill-opacity="0.85"/><circle cx="481" cy="354.8" r="3.2" fill="url(#sp)"/>
<path d="M507.5 500.8L477 470L506.3 502ZM507.5 502L537.5 470L506.3 500.8ZM506.3 500.8L477 529.5L507.5 502ZM506.3 502L535.5 529.5L507.5 500.8ZM507 500.6L487 500L506.8 502.2ZM506.9 502.2L527 500.5L506.9 500.6ZM507.7 501.4L506.5 482L506.1 501.4ZM506.1 501.4L506.5 521L507.7 501.4Z" fill="#fff" fill-opacity="0.95"/><circle cx="506.9" cy="501.4" r="4" fill="url(#sp)"/>
<path d="M641.5 614L616.6 593L640.3 615.4ZM640.2 615.4L669.6 642.8L641.6 614ZM641.8 615L649.8 589.8L640 614.4ZM640.2 614.1L624.3 633.9L641.6 615.3ZM641 613.8L624 612L640.8 615.6ZM640.8 615.6L655 616.6L641 613.8ZM641.8 614.3L633 596L640 615.1ZM640 615L646.6 632.6L641.8 614.4Z" fill="#fff" fill-opacity="0.95"/><circle cx="640.9" cy="614.7" r="4.8" fill="url(#sp)"/>
<path d="M347.5 647.6L370 627L346.5 646.4ZM346.5 646.5L328.7 664.4L347.5 647.5ZM347.7 646.7L340 629L346.3 647.3ZM346.3 647.2L352 662L347.7 646.8ZM347.4 646.4L335 640L346.6 647.6ZM346.6 647.6L360 656L347.4 646.4ZM347.1 647.7L356 646L346.9 646.3ZM346.9 646.3L336 648.5L347.1 647.7Z" fill="#fff" fill-opacity="0.9"/><circle cx="347" cy="647" r="3.6" fill="url(#sp)"/>
<path d="M503.4 654.6L517 641L502.4 653.6ZM503.3 653.4L485 644L502.5 654.8ZM502.4 653.5L486 669L503.4 654.7ZM502.4 654.7L517 667L503.4 653.5ZM502.8 653.4L491 655.6L503 654.8ZM502.9 654.8L512 654L502.9 653.4ZM503.6 654.1L502.5 645L502.2 654.1ZM502.2 654.1L502.5 663L503.6 654.1Z" fill="#fff" fill-opacity="0.85"/><circle cx="502.9" cy="654.1" r="3" fill="url(#sp)"/>
<path d="M685.5 482.6L698.6 469.4L684.5 481.4ZM685.8 481.7L679 464.8L684.2 482.3ZM684.5 481.4L672 493.6L685.5 482.6ZM684.3 482.3L691.7 496L685.7 481.7ZM685 482.8L693.5 482L685 481.2ZM685.1 481.2L676 481L684.9 482.8Z" fill="#fff" fill-opacity="0.85"/><circle cx="685" cy="482" r="3.2" fill="url(#sp)"/>
</g>
<g fill="none" stroke="#2a80fc" stroke-width="1.100">
<ellipse cx="509.900" cy="512.800" rx="196.600" ry="195.500" stroke="#3f88ff"/>
<rect x="313.500" y="317.500" width="393" height="391"/>
<path d="M706.500 490V535M313.500 490V535M490 317.500H530M490 708.500H530" stroke-width="1.600"/>
<path d="M336.3 421 339.2 415.8 342.3 410.7 345.5 405.6 348.9 400.7 352.4 395.8 356 391.1 359.8 386.5 363.8 382 367.9 377.6 372.1 373.4 376.4 369.2 380.9 365.3" stroke-width="2.400" stroke-dasharray="1.400 1.800"/>
<path d="M327.6 586 325.6 580.7 323.6 575.4 321.9 570 320.3 564.5 318.9 559 317.6 553.4 316.5 547.9 315.5 542.3 314.8 536.6 314.2 531 313.7 525.3 313.4 519.6" stroke-width="2.400" stroke-dasharray="1.400 1.800"/>
<path d="M584.500 382L595.500 385L606.500 382L604 394L607 406L595.500 402L584.500 405L587.500 394Z"/>
</g>
<g fill="#478aff">
<rect x="702" y="541" width="4" height="4"/>
<rect x="695" y="571" width="4" height="4"/>
<rect x="683" y="600" width="4" height="4"/>
<rect x="667" y="626" width="4" height="4"/>
<rect x="647" y="649" width="4" height="4"/>
<rect x="623" y="669" width="4" height="4"/>
<rect x="597" y="685" width="4" height="4"/>
<rect x="569" y="697" width="4" height="4"/>
<rect x="539" y="704" width="4" height="4"/>
<rect x="477" y="704" width="4" height="4"/>
<rect x="447" y="697" width="4" height="4"/>
<rect x="419" y="685" width="4" height="4"/>
<rect x="392" y="669" width="4" height="4"/>
<rect x="369" y="649" width="4" height="4"/>
<rect x="349" y="626" width="4" height="4"/>
<rect x="333" y="600" width="4" height="4"/>
<rect x="321" y="571" width="4" height="4"/>
<rect x="314" y="541" width="4" height="4"/>
<rect x="314" y="480" width="4" height="4"/>
<rect x="321" y="450" width="4" height="4"/>
<rect x="333" y="422" width="4" height="4"/>
<rect x="349" y="396" width="4" height="4"/>
<rect x="359" y="384" width="4" height="4"/>
<rect x="380" y="363" width="4" height="4"/>
<rect x="405" y="344" width="4" height="4"/>
<rect x="432" y="331" width="4" height="4"/>
<rect x="461" y="321" width="4" height="4"/>
<rect x="491" y="316" width="4" height="4"/>
<rect x="524" y="316" width="4" height="4"/>
<rect x="569" y="325" width="4" height="4"/>
<rect x="597" y="337" width="4" height="4"/>
<rect x="623" y="353" width="4" height="4"/>
<rect x="647" y="373" width="4" height="4"/>
<rect x="667" y="396" width="4" height="4"/>
<rect x="683" y="422" width="4" height="4"/>
<rect x="695" y="450" width="4" height="4"/>
<rect x="702" y="480" width="4" height="4"/>
<rect x="582" y="380" width="4" height="4"/>
<rect x="594" y="383" width="4" height="4"/>
<rect x="604" y="380" width="4" height="4"/>
<rect x="602" y="392" width="4" height="4"/>
<rect x="605" y="404" width="4" height="4"/>
<rect x="594" y="400" width="4" height="4"/>
<rect x="582" y="403" width="4" height="4"/>
<rect x="586" y="392" width="4" height="4"/>
<rect x="401" y="403" width="4" height="4"/><rect x="412" y="403" width="4" height="4"/><rect x="401" y="415" width="4" height="4"/><rect x="412" y="415" width="4" height="4"/><rect x="406.5" y="405.5" width="4" height="4"/><rect x="406.5" y="412.5" width="4" height="4"/><rect x="403" y="409" width="4" height="4"/><rect x="410" y="409" width="4" height="4"/>
<rect x="478" y="353" width="4" height="4"/><rect x="489" y="353" width="4" height="4"/><rect x="478" y="365" width="4" height="4"/><rect x="489" y="365" width="4" height="4"/><rect x="483.5" y="355.5" width="4" height="4"/><rect x="483.5" y="362.5" width="4" height="4"/><rect x="480" y="359" width="4" height="4"/><rect x="487" y="359" width="4" height="4"/>
<rect x="601.5" y="579" width="4" height="4"/><rect x="612.5" y="579" width="4" height="4"/><rect x="601.5" y="591" width="4" height="4"/><rect x="612.5" y="591" width="4" height="4"/><rect x="607" y="581.5" width="4" height="4"/><rect x="607" y="588.5" width="4" height="4"/><rect x="603.5" y="585" width="4" height="4"/><rect x="610.5" y="585" width="4" height="4"/>
<rect x="393" y="598.5" width="4" height="4"/><rect x="404" y="598.5" width="4" height="4"/><rect x="393" y="610.5" width="4" height="4"/><rect x="404" y="610.5" width="4" height="4"/><rect x="398.5" y="601" width="4" height="4"/><rect x="398.5" y="608" width="4" height="4"/><rect x="395" y="604.5" width="4" height="4"/><rect x="402" y="604.5" width="4" height="4"/>
<rect x="495.5" y="646" width="4" height="4"/><rect x="506.5" y="646" width="4" height="4"/><rect x="495.5" y="658" width="4" height="4"/><rect x="506.5" y="658" width="4" height="4"/><rect x="501" y="648.5" width="4" height="4"/><rect x="501" y="655.5" width="4" height="4"/><rect x="497.5" y="652" width="4" height="4"/><rect x="504.5" y="652" width="4" height="4"/>
<rect x="673.5" y="476" width="4" height="4"/><rect x="684.5" y="476" width="4" height="4"/><rect x="673.5" y="488" width="4" height="4"/><rect x="684.5" y="488" width="4" height="4"/><rect x="679" y="478.5" width="4" height="4"/><rect x="679" y="485.5" width="4" height="4"/><rect x="675.5" y="482" width="4" height="4"/><rect x="682.5" y="482" width="4" height="4"/>
<rect x="499" y="493" width="16" height="17" rx="3"/>
<rect x="495.9" y="489.4" width="4" height="4"/>
<rect x="513.9" y="489.4" width="4" height="4"/>
<rect x="495.9" y="508.4" width="4" height="4"/>
<rect x="513.9" y="508.4" width="4" height="4"/>
<rect x="507.9" y="510.4" width="4" height="4"/>
</g>
<g fill="#fff"><rect x="505" y="500" width="4" height="3"/><rect x="503" y="496" width="1.500" height="1.500"/><rect x="510" y="505" width="1.500" height="1.500"/></g>
<g fill="#fff" stroke="#2a80fc" stroke-width="1">
<rect x="310.5" y="314.5" width="5" height="5"/>
<rect x="507.5" y="314.5" width="5" height="5"/>
<rect x="703.5" y="314.5" width="5" height="5"/>
<rect x="310.5" y="509.5" width="5" height="5"/>
<rect x="703.5" y="509.5" width="5" height="5"/>
<rect x="310.5" y="705.5" width="5" height="5"/>
<rect x="507.5" y="705.5" width="5" height="5"/>
<rect x="703.5" y="705.5" width="5" height="5"/>
</g>
</svg>
</body>
</html>
